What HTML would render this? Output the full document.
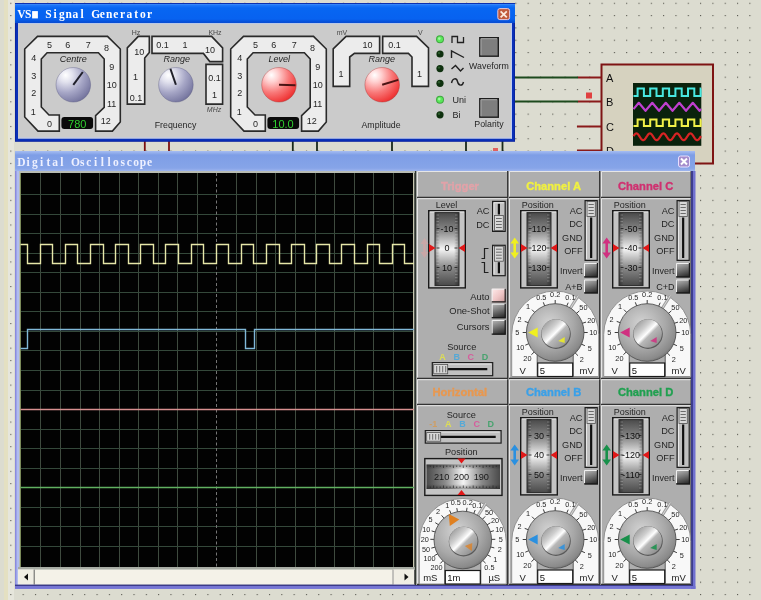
<!DOCTYPE html>
<html><head><meta charset="utf-8"><style>
html,body{margin:0;padding:0;background:#dcdcd0;overflow:hidden}
svg{display:block;will-change:transform}
</style></head><body>
<svg width="761" height="600" viewBox="0 0 761 600">

<defs>
 <pattern id="dots" patternUnits="userSpaceOnUse" x="10.3" y="2.75" width="12.317" height="12.317">
   <rect x="0" y="0" width="1.1" height="1.1" fill="#55554c"/>
 </pattern>
 <linearGradient id="actTitle" x1="0" y1="0" x2="0" y2="1">
   <stop offset="0" stop-color="#5aa0fa"/>
   <stop offset="0.12" stop-color="#1a74f8"/>
   <stop offset="0.25" stop-color="#0766f2"/>
   <stop offset="0.8" stop-color="#0762f0"/>
   <stop offset="0.92" stop-color="#0652dc"/>
   <stop offset="1" stop-color="#0a4cd0"/>
 </linearGradient>
 <linearGradient id="inTitle" x1="0" y1="0" x2="0" y2="1">
   <stop offset="0" stop-color="#a6bdf2"/>
   <stop offset="0.2" stop-color="#7e9ee6"/>
   <stop offset="0.85" stop-color="#86a4e8"/>
   <stop offset="1" stop-color="#9db4ee"/>
 </linearGradient>
 <radialGradient id="knobBlue" cx="0.3" cy="0.25" r="0.9" fx="0.28" fy="0.22">
   <stop offset="0" stop-color="#ffffff"/>
   <stop offset="0.22" stop-color="#e2e2ee"/>
   <stop offset="0.55" stop-color="#a6a6c6"/>
   <stop offset="0.85" stop-color="#7c7ca4"/>
   <stop offset="1" stop-color="#5e5e86"/>
 </radialGradient>
 <linearGradient id="drumV" x1="0" y1="0" x2="0" y2="1">
   <stop offset="0" stop-color="#4a4a4a"/>
   <stop offset="0.25" stop-color="#8a8a8a"/>
   <stop offset="0.5" stop-color="#f4f4f4"/>
   <stop offset="0.75" stop-color="#8a8a8a"/>
   <stop offset="1" stop-color="#4a4a4a"/>
 </linearGradient>
 <linearGradient id="drumVs" x1="0" y1="0" x2="1" y2="0">
   <stop offset="0" stop-color="#000" stop-opacity="0.35"/>
   <stop offset="0.2" stop-color="#000" stop-opacity="0"/>
   <stop offset="0.8" stop-color="#000" stop-opacity="0"/>
   <stop offset="1" stop-color="#000" stop-opacity="0.35"/>
 </linearGradient>
 <linearGradient id="drumH" x1="0" y1="0" x2="1" y2="0">
   <stop offset="0" stop-color="#4a4a4a"/>
   <stop offset="0.25" stop-color="#8a8a8a"/>
   <stop offset="0.5" stop-color="#f4f4f4"/>
   <stop offset="0.75" stop-color="#8a8a8a"/>
   <stop offset="1" stop-color="#4a4a4a"/>
 </linearGradient>
 <linearGradient id="drumHs" x1="0" y1="0" x2="0" y2="1">
   <stop offset="0" stop-color="#000" stop-opacity="0.35"/>
   <stop offset="0.2" stop-color="#000" stop-opacity="0"/>
   <stop offset="0.8" stop-color="#000" stop-opacity="0"/>
   <stop offset="1" stop-color="#000" stop-opacity="0.35"/>
 </linearGradient>
 <linearGradient id="btnDark" x1="0.2" y1="0" x2="0.5" y2="1">
   <stop offset="0" stop-color="#b4b4b4"/>
   <stop offset="0.45" stop-color="#7a7a7a"/>
   <stop offset="1" stop-color="#2e2e2e"/>
 </linearGradient>
 <linearGradient id="btnPink" x1="0" y1="0" x2="1" y2="1">
   <stop offset="0" stop-color="#ffecec"/>
   <stop offset="0.5" stop-color="#f0c8c8"/>
   <stop offset="1" stop-color="#c89898"/>
 </linearGradient>
 <radialGradient id="dialOuter" cx="0.4" cy="0.35" r="0.7">
   <stop offset="0" stop-color="#d4d4d4"/>
   <stop offset="0.6" stop-color="#a8a8a8"/>
   <stop offset="0.9" stop-color="#8a8a8a"/>
   <stop offset="1" stop-color="#6a6a6a"/>
 </radialGradient>
 <linearGradient id="capG" x1="0.1" y1="0.1" x2="0.9" y2="0.9">
   <stop offset="0" stop-color="#9a9a9a"/>
   <stop offset="0.3" stop-color="#cfcfcf"/>
   <stop offset="0.48" stop-color="#ffffff"/>
   <stop offset="0.58" stop-color="#b8b8b8"/>
   <stop offset="1" stop-color="#8c8c8c"/>
 </linearGradient>
 <radialGradient id="knobRed" cx="0.3" cy="0.25" r="0.9" fx="0.28" fy="0.22">
   <stop offset="0" stop-color="#ffffff"/>
   <stop offset="0.22" stop-color="#ffd0d0"/>
   <stop offset="0.55" stop-color="#f87878"/>
   <stop offset="0.85" stop-color="#f03a3a"/>
   <stop offset="1" stop-color="#c82828"/>
 </radialGradient>
</defs>

<rect x="0" y="0" width="761" height="600" fill="#dcdcd0"/>
<rect x="4" y="0" width="4" height="600" fill="#e4e0c2"/>
<rect x="8" y="0" width="6" height="600" fill="#e6e6dc"/>
<rect x="0" y="0" width="761" height="600" fill="url(#dots)"/>
<line x1="515" y1="77.5" x2="578" y2="77.5" stroke="#1d4a1d" stroke-width="2"/>
<line x1="578" y1="77.5" x2="601" y2="77.5" stroke="#8a1a1a" stroke-width="2"/>
<line x1="515" y1="101.5" x2="578" y2="101.5" stroke="#1d4a1d" stroke-width="2"/>
<line x1="578" y1="101.5" x2="601" y2="101.5" stroke="#8a1a1a" stroke-width="2"/>
<line x1="577" y1="126.5" x2="601" y2="126.5" stroke="#8a1a1a" stroke-width="2"/>
<line x1="577" y1="150.5" x2="601" y2="150.5" stroke="#8a1a1a" stroke-width="2"/>
<rect x="586" y="92.5" width="6" height="6" fill="#e04040"/>
<line x1="144.8" y1="141" x2="144.8" y2="152" stroke="#7a1010" stroke-width="1.8"/>
<line x1="169" y1="141" x2="169" y2="152" stroke="#7a1010" stroke-width="1.8"/>
<line x1="292.8" y1="141" x2="292.8" y2="152" stroke="#1a2a1a" stroke-width="1.8"/>
<line x1="317" y1="141" x2="317" y2="152" stroke="#1a2a1a" stroke-width="1.8"/>
<line x1="392" y1="141" x2="392" y2="152" stroke="#1a2a1a" stroke-width="1.8"/>
<line x1="466" y1="141" x2="466" y2="152" stroke="#1a2a1a" stroke-width="1.8"/>
<line x1="502.5" y1="141" x2="502.5" y2="152" stroke="#1a2a1a" stroke-width="1.8"/>
<rect x="493" y="148" width="5" height="3" fill="#e06060"/>
<rect x="601.5" y="64.5" width="111.5" height="99" fill="#d6d2bf" stroke="#7e1414" stroke-width="2"/>
<text x="606" y="82.0" font-family="Liberation Sans, sans-serif" font-size="11" fill="#101010">A</text>
<text x="606" y="106.3" font-family="Liberation Sans, sans-serif" font-size="11" fill="#101010">B</text>
<text x="606" y="130.6" font-family="Liberation Sans, sans-serif" font-size="11" fill="#101010">C</text>
<text x="606" y="154.9" font-family="Liberation Sans, sans-serif" font-size="11" fill="#101010">D</text>
<rect x="633" y="83" width="68.3" height="62.8" fill="#0a220c"/>
<path d="M633.5,96 L637.6,96 L637.6,88.4 L643.9,88.4 L643.9,96 L650.2,96 L650.2,88.4 L656.5,88.4 L656.5,96 L662.8,96 L662.8,88.4 L669.1,88.4 L669.1,96 L675.4,96 L675.4,88.4 L681.7,88.4 L681.7,96 L688.0,96 L688.0,88.4 L694.3,88.4 L694.3,96 L700.6,96 L700.6,88.4 L701,88.4" fill="none" stroke="#48e8e0" stroke-width="2"/>
<polyline points="633.5,109.1 638.8,102.8 645.5,110.8 652.3,102.8 659.0,110.8 665.8,102.8 672.5,110.8 679.3,102.8 686.0,110.8 692.8,102.8 699.5,110.8 701.0,109.1" fill="none" stroke="#c040d0" stroke-width="2.2" stroke-linejoin="round"/>
<path d="M633.5,126 L637.6,126 L637.6,119.4 L643.9,119.4 L643.9,126 L650.2,126 L650.2,119.4 L656.5,119.4 L656.5,126 L662.8,126 L662.8,119.4 L669.1,119.4 L669.1,126 L675.4,126 L675.4,119.4 L681.7,119.4 L681.7,126 L688.0,126 L688.0,119.4 L694.3,119.4 L694.3,126 L700.6,126 L700.6,119.4 L701,119.4" fill="none" stroke="#f0f048" stroke-width="2"/>
<polyline points="633.5,136.1 634.0,135.3 634.5,134.6 635.0,134.1 635.5,133.7 636.0,133.5 636.5,133.4 637.0,133.5 637.5,133.8 638.0,134.3 638.5,134.9 639.0,135.6 639.5,136.4 640.0,137.2 640.5,137.9 641.0,138.6 641.5,139.2 642.0,139.7 642.5,140.0 643.0,140.2 643.5,140.2 644.0,139.9 644.5,139.6 645.0,139.0 645.5,138.4 646.0,137.6 646.5,136.8 647.0,136.1 647.5,135.3 648.0,134.6 648.5,134.1 649.0,133.7 649.5,133.5 650.0,133.4 650.5,133.5 651.0,133.8 651.5,134.3 652.0,134.9 652.5,135.6 653.0,136.4 653.5,137.2 654.0,137.9 654.5,138.6 655.0,139.2 655.5,139.7 656.0,140.0 656.5,140.2 657.0,140.2 657.5,139.9 658.0,139.6 658.5,139.0 659.0,138.4 659.5,137.6 660.0,136.8 660.5,136.1 661.0,135.3 661.5,134.6 662.0,134.1 662.5,133.7 663.0,133.5 663.5,133.4 664.0,133.5 664.5,133.8 665.0,134.3 665.5,134.9 666.0,135.6 666.5,136.4 667.0,137.2 667.5,137.9 668.0,138.6 668.5,139.2 669.0,139.7 669.5,140.0 670.0,140.2 670.5,140.2 671.0,139.9 671.5,139.6 672.0,139.0 672.5,138.4 673.0,137.6 673.5,136.8 674.0,136.1 674.5,135.3 675.0,134.6 675.5,134.1 676.0,133.7 676.5,133.5 677.0,133.4 677.5,133.5 678.0,133.8 678.5,134.3 679.0,134.9 679.5,135.6 680.0,136.4 680.5,137.2 681.0,137.9 681.5,138.6 682.0,139.2 682.5,139.7 683.0,140.0 683.5,140.2 684.0,140.2 684.5,139.9 685.0,139.6 685.5,139.0 686.0,138.4 686.5,137.6 687.0,136.8 687.5,136.1 688.0,135.3 688.5,134.6 689.0,134.1 689.5,133.7 690.0,133.5 690.5,133.4 691.0,133.5 691.5,133.8 692.0,134.3 692.5,134.9 693.0,135.6 693.5,136.4 694.0,137.2 694.5,137.9 695.0,138.6 695.5,139.2 696.0,139.7 696.5,140.0 697.0,140.2 697.5,140.2 698.0,139.9 698.5,139.6 699.0,139.0 699.5,138.4 700.0,137.6 700.5,136.8 701.0,136.1" fill="none" stroke="#d82424" stroke-width="2.2"/>
<rect x="15" y="3" width="500" height="138.8" fill="#0a24a0"/>
<rect x="16" y="3" width="498" height="137.8" fill="#0a30b8"/>
<rect x="15" y="3" width="500" height="20" fill="url(#actTitle)"/>
<rect x="18" y="23" width="494" height="115.5" fill="#cbcbcb"/>
<rect x="18" y="23" width="494" height="1" fill="#b8c8e8"/>
<rect x="511" y="23" width="1" height="115.5" fill="#c0ccf0"/>
<rect x="18" y="137.5" width="494" height="1" fill="#c0ccf0"/>
<rect x="32.10" y="11.099999999999998" width="5.8" height="7.3" fill="#ffffff"/>
<text x="21.38 28.12 48.38 55.12 61.88 68.62 75.38 82.12 95.62 102.38 109.12 115.88 122.62 129.38 136.12 142.88 149.62" y="18.4" font-family="Liberation Serif, serif" font-weight="bold" font-size="11.5" fill="#ffffff" text-anchor="middle">VSSignalGenerator</text>
<rect x="497.8" y="8.6" width="11.8" height="11" rx="2" fill="#c05a3c" stroke="#e8c8d8" stroke-width="1"/>
<path d="M500.6,11.4 L506.8,17.4 M506.8,11.4 L500.6,17.4" stroke="#fbe8dc" stroke-width="1.8"/>
<rect x="15" y="3" width="500" height="1" fill="#0a30b0"/>
<rect x="15" y="151" width="680" height="438" fill="#8a8ade"/>
<rect x="15" y="151" width="680" height="20" fill="url(#inTitle)"/>
<text x="21.38 28.12 34.88 41.62 48.38 55.12 61.88 75.38 82.12 88.88 95.62 102.38 109.12 115.88 122.62 129.38 136.12 142.88 149.62" y="166.4" font-family="Liberation Serif, serif" font-weight="bold" font-size="11.5" fill="#eef0ff" text-anchor="middle">DigitalOscilloscope</text>
<rect x="678.5" y="156" width="11" height="11" rx="2" fill="#a48ccc" stroke="#e8e0ff" stroke-width="1"/>
<path d="M681,158.5 L687,164.5 M687,158.5 L681,164.5" stroke="#ffffff" stroke-width="2"/>
<rect x="16.5" y="171" width="2.5" height="414" fill="#b0bcf0"/>
<rect x="19" y="171" width="397" height="414" fill="#b8bcb4"/>
<rect x="20" y="173" width="394.5" height="394" fill="#020202"/>
<line x1="40.5" y1="173" x2="40.5" y2="567" stroke="#3e4a3e" stroke-width="1"/>
<line x1="60.5" y1="173" x2="60.5" y2="567" stroke="#3e4a3e" stroke-width="1"/>
<line x1="80.5" y1="173" x2="80.5" y2="567" stroke="#3e4a3e" stroke-width="1"/>
<line x1="99.5" y1="173" x2="99.5" y2="567" stroke="#3e4a3e" stroke-width="1"/>
<line x1="119.5" y1="173" x2="119.5" y2="567" stroke="#3e4a3e" stroke-width="1"/>
<line x1="138.5" y1="173" x2="138.5" y2="567" stroke="#3e4a3e" stroke-width="1"/>
<line x1="158.5" y1="173" x2="158.5" y2="567" stroke="#3e4a3e" stroke-width="1"/>
<line x1="177.5" y1="173" x2="177.5" y2="567" stroke="#3e4a3e" stroke-width="1"/>
<line x1="197.5" y1="173" x2="197.5" y2="567" stroke="#3e4a3e" stroke-width="1"/>
<line x1="236.5" y1="173" x2="236.5" y2="567" stroke="#3e4a3e" stroke-width="1"/>
<line x1="256.5" y1="173" x2="256.5" y2="567" stroke="#3e4a3e" stroke-width="1"/>
<line x1="275.5" y1="173" x2="275.5" y2="567" stroke="#3e4a3e" stroke-width="1"/>
<line x1="295.5" y1="173" x2="295.5" y2="567" stroke="#3e4a3e" stroke-width="1"/>
<line x1="315.5" y1="173" x2="315.5" y2="567" stroke="#3e4a3e" stroke-width="1"/>
<line x1="334.5" y1="173" x2="334.5" y2="567" stroke="#3e4a3e" stroke-width="1"/>
<line x1="354.5" y1="173" x2="354.5" y2="567" stroke="#3e4a3e" stroke-width="1"/>
<line x1="373.5" y1="173" x2="373.5" y2="567" stroke="#3e4a3e" stroke-width="1"/>
<line x1="393.5" y1="173" x2="393.5" y2="567" stroke="#3e4a3e" stroke-width="1"/>
<line x1="20" y1="194.5" x2="414" y2="194.5" stroke="#34483a" stroke-width="1"/>
<line x1="20" y1="214.5" x2="414" y2="214.5" stroke="#34483a" stroke-width="1"/>
<line x1="20" y1="233.5" x2="414" y2="233.5" stroke="#34483a" stroke-width="1"/>
<line x1="20" y1="253.5" x2="414" y2="253.5" stroke="#34483a" stroke-width="1"/>
<line x1="20" y1="272.5" x2="414" y2="272.5" stroke="#34483a" stroke-width="1"/>
<line x1="20" y1="292.5" x2="414" y2="292.5" stroke="#34483a" stroke-width="1"/>
<line x1="20" y1="311.5" x2="414" y2="311.5" stroke="#34483a" stroke-width="1"/>
<line x1="20" y1="331.5" x2="414" y2="331.5" stroke="#34483a" stroke-width="1"/>
<line x1="20" y1="350.5" x2="414" y2="350.5" stroke="#34483a" stroke-width="1"/>
<line x1="20" y1="370.5" x2="414" y2="370.5" stroke="#34483a" stroke-width="1"/>
<line x1="20" y1="390.5" x2="414" y2="390.5" stroke="#34483a" stroke-width="1"/>
<line x1="20" y1="409.5" x2="414" y2="409.5" stroke="#34483a" stroke-width="1"/>
<line x1="20" y1="429.5" x2="414" y2="429.5" stroke="#34483a" stroke-width="1"/>
<line x1="20" y1="448.5" x2="414" y2="448.5" stroke="#34483a" stroke-width="1"/>
<line x1="20" y1="468.5" x2="414" y2="468.5" stroke="#34483a" stroke-width="1"/>
<line x1="20" y1="487.5" x2="414" y2="487.5" stroke="#34483a" stroke-width="1"/>
<line x1="20" y1="507.5" x2="414" y2="507.5" stroke="#34483a" stroke-width="1"/>
<line x1="20" y1="526.5" x2="414" y2="526.5" stroke="#34483a" stroke-width="1"/>
<line x1="20" y1="546.5" x2="414" y2="546.5" stroke="#34483a" stroke-width="1"/>
<line x1="216.5" y1="173" x2="216.5" y2="567" stroke="#747474" stroke-width="1" stroke-dasharray="3,2.5"/>
<line x1="20.5" y1="173" x2="20.5" y2="567" stroke="#7a8a5a" stroke-width="1"/>
<line x1="413.5" y1="173" x2="413.5" y2="567" stroke="#c8c8b0" stroke-width="1"/>
<path d="M20.5,244.5 L27.5,244.5 L27.5,263.5 L40.5,263.5 L40.5,244.5 L52.5,244.5 L52.5,263.5 L65.5,263.5 L65.5,244.5 L77.5,244.5 L77.5,263.5 L90.5,263.5 L90.5,244.5 L103.5,244.5 L103.5,263.5 L115.5,263.5 L115.5,244.5 L128.5,244.5 L128.5,263.5 L140.5,263.5 L140.5,244.5 L153.5,244.5 L153.5,263.5 L165.5,263.5 L165.5,244.5 L178.5,244.5 L178.5,263.5 L191.5,263.5 L191.5,244.5 L203.5,244.5 L203.5,263.5 L216.5,263.5 L216.5,244.5 L228.5,244.5 L228.5,263.5 L241.5,263.5 L241.5,244.5 L253.5,244.5 L253.5,263.5 L266.5,263.5 L266.5,244.5 L279.5,244.5 L279.5,263.5 L291.5,263.5 L291.5,244.5 L304.5,244.5 L304.5,263.5 L316.5,263.5 L316.5,244.5 L329.5,244.5 L329.5,263.5 L341.5,263.5 L341.5,244.5 L354.5,244.5 L354.5,263.5 L367.5,263.5 L367.5,244.5 L379.5,244.5 L379.5,263.5 L392.5,263.5 L392.5,244.5 L404.5,244.5 L404.5,263.5 L414,263.5" fill="none" stroke="#e6e6a8" stroke-width="1.4"/>
<path d="M20.5,348.5 L27.5,348.5 L27.5,329.5 L245.5,329.5 L245.5,348.5 L254.5,348.5 L254.5,329.5 L414,329.5" fill="none" stroke="#80b8d8" stroke-width="1.4"/>
<line x1="20.5" y1="409.5" x2="414" y2="409.5" stroke="#d89090" stroke-width="1.4"/>
<line x1="20.5" y1="487.5" x2="414" y2="487.5" stroke="#60b060" stroke-width="1.6"/>
<rect x="18" y="567" width="397" height="2.6" fill="#a8aca4"/>
<rect x="18" y="569.6" width="397" height="15" fill="#f4f2e8"/>
<rect x="18" y="569.6" width="16.5" height="15" fill="#f0eee4"/>
<line x1="34.2" y1="569.6" x2="34.2" y2="584.6" stroke="#606060" stroke-width="1"/>
<path d="M24,577 L28,573.5 L28,580.5 Z" fill="#101010"/>
<rect x="393" y="569.6" width="21.7" height="15" fill="#f0eee4"/>
<line x1="393" y1="569.6" x2="393" y2="584.6" stroke="#909090" stroke-width="1"/>
<line x1="414.5" y1="569.6" x2="414.5" y2="584.6" stroke="#606060" stroke-width="1"/>
<path d="M408.5,577 L404.5,573.5 L404.5,580.5 Z" fill="#101010"/>
<rect x="15" y="584.6" width="680" height="1.6" fill="#3a3a8a"/>
<rect x="15" y="586.2" width="680.5" height="2.5" fill="#7676d4"/>
<rect x="415" y="171" width="278" height="414" fill="#aeaeae"/>
<path d="M59.3,131.1 L59.3,115.0 L49.0,115.0 L41.3,107.0 L41.3,59.0 L47.1,52.8 L98.4,52.8 L104.2,59.0 L104.2,107.4 L95.6,115.7 L95.6,131.1 L112.4,131.1 L120.3,122.0 L120.3,49.0 L107.5,36.4 L37.5,36.4 L24.7,49.0 L24.7,117.0 L38.0,131.1 Z" fill="#ececec" stroke="#2a2a2a" stroke-width="1.6" stroke-linejoin="miter"/>
<text x="49.4" y="127.3" font-family="Liberation Sans, sans-serif" font-size="9" fill="#262626" text-anchor="middle" >0</text>
<text x="33.3" y="115.3" font-family="Liberation Sans, sans-serif" font-size="9" fill="#262626" text-anchor="middle" >1</text>
<text x="33.7" y="96.1" font-family="Liberation Sans, sans-serif" font-size="9" fill="#262626" text-anchor="middle" >2</text>
<text x="33.7" y="79.3" font-family="Liberation Sans, sans-serif" font-size="9" fill="#262626" text-anchor="middle" >3</text>
<text x="33.7" y="60.9" font-family="Liberation Sans, sans-serif" font-size="9" fill="#262626" text-anchor="middle" >4</text>
<text x="49.4" y="47.5" font-family="Liberation Sans, sans-serif" font-size="9" fill="#262626" text-anchor="middle" >5</text>
<text x="67.8" y="47.5" font-family="Liberation Sans, sans-serif" font-size="9" fill="#262626" text-anchor="middle" >6</text>
<text x="88.3" y="47.5" font-family="Liberation Sans, sans-serif" font-size="9" fill="#262626" text-anchor="middle" >7</text>
<text x="106.6" y="50.7" font-family="Liberation Sans, sans-serif" font-size="9" fill="#262626" text-anchor="middle" >8</text>
<text x="111.7" y="70.4" font-family="Liberation Sans, sans-serif" font-size="9" fill="#262626" text-anchor="middle" >9</text>
<text x="111.7" y="87.8" font-family="Liberation Sans, sans-serif" font-size="9" fill="#262626" text-anchor="middle" >10</text>
<text x="111.7" y="107.1" font-family="Liberation Sans, sans-serif" font-size="9" fill="#262626" text-anchor="middle" >11</text>
<text x="105.7" y="123.6" font-family="Liberation Sans, sans-serif" font-size="9" fill="#262626" text-anchor="middle" >12</text>
<rect x="61.4" y="117" width="31.7" height="12" rx="3" fill="#0a0a0a"/>
<text x="73.3" y="62.0" font-family="Liberation Sans, sans-serif" font-size="9" fill="#262626" text-anchor="middle" font-style="italic">Centre</text>
<text x="77.3" y="127.6" font-family="Liberation Sans, sans-serif" font-size="11" fill="#30d030" text-anchor="middle" >780</text>
<circle cx="73.3" cy="84.8" r="17.3" fill="url(#knobBlue)" stroke="#50507a" stroke-width="0.6" stroke-opacity="0.6"/>
<line x1="73.3" y1="84.8" x2="82.8" y2="72.0" stroke="#20202a" stroke-width="2" stroke-linecap="butt"/>
<path d="M265.3,131.1 L265.3,115.0 L255.0,115.0 L247.3,107.0 L247.3,59.0 L253.1,52.8 L304.4,52.8 L310.2,59.0 L310.2,107.4 L301.6,115.7 L301.6,131.1 L318.4,131.1 L326.3,122.0 L326.3,49.0 L313.5,36.4 L243.5,36.4 L230.7,49.0 L230.7,117.0 L244.0,131.1 Z" fill="#ececec" stroke="#2a2a2a" stroke-width="1.6" stroke-linejoin="miter"/>
<text x="255.4" y="127.3" font-family="Liberation Sans, sans-serif" font-size="9" fill="#262626" text-anchor="middle" >0</text>
<text x="239.3" y="115.3" font-family="Liberation Sans, sans-serif" font-size="9" fill="#262626" text-anchor="middle" >1</text>
<text x="239.7" y="96.1" font-family="Liberation Sans, sans-serif" font-size="9" fill="#262626" text-anchor="middle" >2</text>
<text x="239.7" y="79.3" font-family="Liberation Sans, sans-serif" font-size="9" fill="#262626" text-anchor="middle" >3</text>
<text x="239.7" y="60.9" font-family="Liberation Sans, sans-serif" font-size="9" fill="#262626" text-anchor="middle" >4</text>
<text x="255.4" y="47.5" font-family="Liberation Sans, sans-serif" font-size="9" fill="#262626" text-anchor="middle" >5</text>
<text x="273.8" y="47.5" font-family="Liberation Sans, sans-serif" font-size="9" fill="#262626" text-anchor="middle" >6</text>
<text x="294.3" y="47.5" font-family="Liberation Sans, sans-serif" font-size="9" fill="#262626" text-anchor="middle" >7</text>
<text x="312.6" y="50.7" font-family="Liberation Sans, sans-serif" font-size="9" fill="#262626" text-anchor="middle" >8</text>
<text x="317.7" y="70.4" font-family="Liberation Sans, sans-serif" font-size="9" fill="#262626" text-anchor="middle" >9</text>
<text x="317.7" y="87.8" font-family="Liberation Sans, sans-serif" font-size="9" fill="#262626" text-anchor="middle" >10</text>
<text x="317.7" y="107.1" font-family="Liberation Sans, sans-serif" font-size="9" fill="#262626" text-anchor="middle" >11</text>
<text x="311.7" y="123.6" font-family="Liberation Sans, sans-serif" font-size="9" fill="#262626" text-anchor="middle" >12</text>
<rect x="267.4" y="117" width="31.7" height="12" rx="3" fill="#0a0a0a"/>
<text x="279.3" y="62.0" font-family="Liberation Sans, sans-serif" font-size="9" fill="#262626" text-anchor="middle" font-style="italic">Level</text>
<text x="283.0" y="127.6" font-family="Liberation Sans, sans-serif" font-size="11" fill="#30d030" text-anchor="middle" >10.0</text>
<circle cx="279" cy="84.8" r="17.3" fill="url(#knobRed)" stroke="#a02828" stroke-width="0.6" stroke-opacity="0.6"/>
<line x1="279" y1="84.8" x2="295.5" y2="85.2" stroke="#4a1414" stroke-width="2" stroke-linecap="butt"/>
<path d="M127.3,47.9 L138.3,36.4 L149.3,36.4 L149.3,52.5 L144.7,58.0 L144.7,104.1 L127.3,104.1 Z" fill="#ececec" stroke="#2a2a2a" stroke-width="1.6" stroke-linejoin="miter"/>
<path d="M152.0,36.4 L211.6,36.4 L222.6,47.9 L222.6,61.6 L209.8,61.6 L203.4,53.4 L152.0,53.4 Z" fill="#ececec" stroke="#2a2a2a" stroke-width="1.6" stroke-linejoin="miter"/>
<path d="M206.0,64.4 L222.6,64.4 L222.6,104.1 L206.0,104.1 Z" fill="#ececec" stroke="#2a2a2a" stroke-width="1.6" stroke-linejoin="miter"/>
<text x="139.2" y="54.9" font-family="Liberation Sans, sans-serif" font-size="9" fill="#262626" text-anchor="middle" >10</text>
<text x="135.6" y="80.0" font-family="Liberation Sans, sans-serif" font-size="9" fill="#262626" text-anchor="middle" >1</text>
<text x="136.1" y="101.2" font-family="Liberation Sans, sans-serif" font-size="9" fill="#262626" text-anchor="middle" >0.1</text>
<text x="162.5" y="48.1" font-family="Liberation Sans, sans-serif" font-size="9" fill="#262626" text-anchor="middle" >0.1</text>
<text x="185.0" y="48.1" font-family="Liberation Sans, sans-serif" font-size="9" fill="#262626" text-anchor="middle" >1</text>
<text x="210.1" y="53.0" font-family="Liberation Sans, sans-serif" font-size="9" fill="#262626" text-anchor="middle" >10</text>
<text x="214.4" y="81.4" font-family="Liberation Sans, sans-serif" font-size="9" fill="#262626" text-anchor="middle" >0.1</text>
<text x="214.4" y="98.3" font-family="Liberation Sans, sans-serif" font-size="9" fill="#262626" text-anchor="middle" >1</text>
<text x="136.0" y="35.0" font-family="Liberation Sans, sans-serif" font-size="7" fill="#484848" text-anchor="middle" >Hz</text>
<text x="215.0" y="35.0" font-family="Liberation Sans, sans-serif" font-size="7" fill="#484848" text-anchor="middle" >KHz</text>
<text x="214.0" y="111.5" font-family="Liberation Sans, sans-serif" font-size="7" fill="#484848" text-anchor="middle" font-style="italic">MHz</text>
<text x="176.8" y="62.0" font-family="Liberation Sans, sans-serif" font-size="9" fill="#262626" text-anchor="middle" font-style="italic">Range</text>
<text x="175.5" y="128.2" font-family="Liberation Sans, sans-serif" font-size="8.8" fill="#262626" text-anchor="middle" >Frequency</text>
<circle cx="175.9" cy="84.8" r="17.3" fill="url(#knobBlue)" stroke="#50507a" stroke-width="0.6" stroke-opacity="0.6"/>
<line x1="175.9" y1="84.8" x2="170.4" y2="68.7" stroke="#20202a" stroke-width="2" stroke-linecap="butt"/>
<path d="M333.2,48.8 L346.1,36.4 L379.6,36.4 L379.6,53.4 L354.4,53.4 L349.7,57.0 L349.7,86.4 L333.2,86.4 Z" fill="#ececec" stroke="#2a2a2a" stroke-width="1.6" stroke-linejoin="miter"/>
<path d="M382.7,36.4 L416.6,36.4 L428.5,47.9 L428.5,86.4 L412.0,86.4 L412.0,57.0 L408.4,53.4 L382.7,53.4 Z" fill="#ececec" stroke="#2a2a2a" stroke-width="1.6" stroke-linejoin="miter"/>
<text x="367.5" y="48.1" font-family="Liberation Sans, sans-serif" font-size="9" fill="#262626" text-anchor="middle" >10</text>
<text x="341.1" y="77.4" font-family="Liberation Sans, sans-serif" font-size="9" fill="#262626" text-anchor="middle" >1</text>
<text x="394.6" y="48.1" font-family="Liberation Sans, sans-serif" font-size="9" fill="#262626" text-anchor="middle" >0.1</text>
<text x="419.4" y="77.4" font-family="Liberation Sans, sans-serif" font-size="9" fill="#262626" text-anchor="middle" >1</text>
<text x="342.0" y="35.0" font-family="Liberation Sans, sans-serif" font-size="7" fill="#484848" text-anchor="middle" >mV</text>
<text x="420.3" y="35.0" font-family="Liberation Sans, sans-serif" font-size="7" fill="#484848" text-anchor="middle" >V</text>
<text x="381.8" y="62.0" font-family="Liberation Sans, sans-serif" font-size="9" fill="#262626" text-anchor="middle" font-style="italic">Range</text>
<text x="381.0" y="128.2" font-family="Liberation Sans, sans-serif" font-size="8.8" fill="#262626" text-anchor="middle" >Amplitude</text>
<circle cx="382.2" cy="84.8" r="17.3" fill="url(#knobRed)" stroke="#a02828" stroke-width="0.6" stroke-opacity="0.6"/>
<line x1="382.2" y1="84.8" x2="398.3" y2="79.9" stroke="#4a1414" stroke-width="2" stroke-linecap="butt"/>
<circle cx="440" cy="39.3" r="4" fill="#40a840"/><circle cx="440" cy="39.3" r="3" fill="#5ae85a"/><circle cx="439.3" cy="38.599999999999994" r="1.3" fill="#a0f8a0"/>
<circle cx="440" cy="54" r="3.6" fill="#0e300e"/><circle cx="439" cy="53" r="1.2" fill="#2a5a2a"/>
<circle cx="440" cy="68.6" r="3.6" fill="#0e300e"/><circle cx="439" cy="67.6" r="1.2" fill="#2a5a2a"/>
<circle cx="440" cy="83.3" r="3.6" fill="#0e300e"/><circle cx="439" cy="82.3" r="1.2" fill="#2a5a2a"/>
<circle cx="440" cy="99.8" r="4" fill="#40a840"/><circle cx="440" cy="99.8" r="3" fill="#5ae85a"/><circle cx="439.3" cy="99.1" r="1.3" fill="#a0f8a0"/>
<circle cx="440" cy="114.8" r="3.6" fill="#0e300e"/><circle cx="439" cy="113.8" r="1.2" fill="#2a5a2a"/>
<path d="M452,43 L452,36.5 L457.5,36.5 L457.5,42.5 L463.5,42.5 L463.5,37" fill="none" stroke="#202020" stroke-width="1.3"/>
<path d="M451.5,58 L451.5,51 L464,57.5" fill="none" stroke="#202020" stroke-width="1.4"/>
<path d="M451.5,69 L455.5,65.5 L460.5,71 L463.5,68" fill="none" stroke="#202020" stroke-width="1.4"/>
<path d="M451.5,83 C452.5,78 456.5,77.5 457.5,81.5 C458.5,86 462.5,86.5 463.5,82" fill="none" stroke="#202020" stroke-width="1.4"/>
<text x="452.5" y="103.0" font-family="Liberation Sans, sans-serif" font-size="9" fill="#262626" text-anchor="start" >Uni</text>
<text x="452.5" y="118.0" font-family="Liberation Sans, sans-serif" font-size="9" fill="#262626" text-anchor="start" >Bi</text>
<rect x="479.8" y="37.7" width="18.5" height="18.5" fill="#7e7e7e" stroke="#1e1e1e" stroke-width="1.4"/>
<path d="M481,55.2 L481,38.7 L497,38.7" fill="none" stroke="#a8a8a8" stroke-width="1"/>
<rect x="479.8" y="98.7" width="18.5" height="18.5" fill="#7e7e7e" stroke="#1e1e1e" stroke-width="1.4"/>
<path d="M481,116.2 L481,99.7 L497,99.7" fill="none" stroke="#a8a8a8" stroke-width="1"/>
<text x="489.0" y="69.2" font-family="Liberation Sans, sans-serif" font-size="8.8" fill="#262626" text-anchor="middle" >Waveform</text>
<text x="489.0" y="127.2" font-family="Liberation Sans, sans-serif" font-size="8.8" fill="#262626" text-anchor="middle" >Polarity</text>
<line x1="415.5" y1="171" x2="415.5" y2="585" stroke="#303830" stroke-width="1.2"/>
<rect x="417" y="171" width="91.30000000000001" height="27" fill="#aeaeae"/>
<path d="M417.5,198 L417.5,171.5 L508.3,171.5" fill="none" stroke="#e6e6e6" stroke-width="1"/>
<path d="M417,197.4 L507.7,197.4 L507.7,171" fill="none" stroke="#333333" stroke-width="1.3"/>
<rect x="417" y="198.2" width="91.30000000000001" height="180.7" fill="#aeaeae"/>
<path d="M417.5,378.9 L417.5,198.7 L508.3,198.7" fill="none" stroke="#e6e6e6" stroke-width="1"/>
<path d="M417,378.29999999999995 L507.7,378.29999999999995 L507.7,198.2" fill="none" stroke="#333333" stroke-width="1.3"/>
<rect x="417" y="379.2" width="91.30000000000001" height="25.80000000000001" fill="#aeaeae"/>
<path d="M417.5,405 L417.5,379.7 L508.3,379.7" fill="none" stroke="#e6e6e6" stroke-width="1"/>
<path d="M417,404.4 L507.7,404.4 L507.7,379.2" fill="none" stroke="#333333" stroke-width="1.3"/>
<rect x="417" y="405.2" width="91.30000000000001" height="179.8" fill="#aeaeae"/>
<path d="M417.5,585 L417.5,405.7 L508.3,405.7" fill="none" stroke="#e6e6e6" stroke-width="1"/>
<path d="M417,584.4 L507.7,584.4 L507.7,405.2" fill="none" stroke="#333333" stroke-width="1.3"/>
<rect x="509" y="171" width="91.29999999999995" height="27" fill="#aeaeae"/>
<path d="M509.5,198 L509.5,171.5 L600.3,171.5" fill="none" stroke="#e6e6e6" stroke-width="1"/>
<path d="M509,197.4 L599.6999999999999,197.4 L599.6999999999999,171" fill="none" stroke="#333333" stroke-width="1.3"/>
<rect x="509" y="198.2" width="91.29999999999995" height="180.7" fill="#aeaeae"/>
<path d="M509.5,378.9 L509.5,198.7 L600.3,198.7" fill="none" stroke="#e6e6e6" stroke-width="1"/>
<path d="M509,378.29999999999995 L599.6999999999999,378.29999999999995 L599.6999999999999,198.2" fill="none" stroke="#333333" stroke-width="1.3"/>
<rect x="509" y="379.2" width="91.29999999999995" height="25.80000000000001" fill="#aeaeae"/>
<path d="M509.5,405 L509.5,379.7 L600.3,379.7" fill="none" stroke="#e6e6e6" stroke-width="1"/>
<path d="M509,404.4 L599.6999999999999,404.4 L599.6999999999999,379.2" fill="none" stroke="#333333" stroke-width="1.3"/>
<rect x="509" y="405.2" width="91.29999999999995" height="179.8" fill="#aeaeae"/>
<path d="M509.5,585 L509.5,405.7 L600.3,405.7" fill="none" stroke="#e6e6e6" stroke-width="1"/>
<path d="M509,584.4 L599.6999999999999,584.4 L599.6999999999999,405.2" fill="none" stroke="#333333" stroke-width="1.3"/>
<rect x="601" y="171" width="90.79999999999995" height="27" fill="#aeaeae"/>
<path d="M601.5,198 L601.5,171.5 L691.8,171.5" fill="none" stroke="#e6e6e6" stroke-width="1"/>
<path d="M601,197.4 L691.1999999999999,197.4 L691.1999999999999,171" fill="none" stroke="#333333" stroke-width="1.3"/>
<rect x="601" y="198.2" width="90.79999999999995" height="180.7" fill="#aeaeae"/>
<path d="M601.5,378.9 L601.5,198.7 L691.8,198.7" fill="none" stroke="#e6e6e6" stroke-width="1"/>
<path d="M601,378.29999999999995 L691.1999999999999,378.29999999999995 L691.1999999999999,198.2" fill="none" stroke="#333333" stroke-width="1.3"/>
<rect x="601" y="379.2" width="90.79999999999995" height="25.80000000000001" fill="#aeaeae"/>
<path d="M601.5,405 L601.5,379.7 L691.8,379.7" fill="none" stroke="#e6e6e6" stroke-width="1"/>
<path d="M601,404.4 L691.1999999999999,404.4 L691.1999999999999,379.2" fill="none" stroke="#333333" stroke-width="1.3"/>
<rect x="601" y="405.2" width="90.79999999999995" height="179.8" fill="#aeaeae"/>
<path d="M601.5,585 L601.5,405.7 L691.8,405.7" fill="none" stroke="#e6e6e6" stroke-width="1"/>
<path d="M601,584.4 L691.1999999999999,584.4 L691.1999999999999,405.2" fill="none" stroke="#333333" stroke-width="1.3"/>
<rect x="691" y="171" width="4.5" height="418" fill="#7070d0"/>
<line x1="692" y1="171" x2="692" y2="586" stroke="#30307a" stroke-width="1.6"/>
<text x="460.0" y="190.0" font-family="Liberation Sans, sans-serif" font-size="11.2" fill="#e2a2a8" text-anchor="middle" font-weight="bold" stroke="#e2a2a8" stroke-width="0.35">Trigger</text>
<text x="553.6" y="190.0" font-family="Liberation Sans, sans-serif" font-size="11.2" fill="#f0f040" text-anchor="middle" font-weight="bold" stroke="#f0f040" stroke-width="0.35">Channel A</text>
<text x="645.6" y="190.0" font-family="Liberation Sans, sans-serif" font-size="11.2" fill="#d03070" text-anchor="middle" font-weight="bold" stroke="#d03070" stroke-width="0.35">Channel C</text>
<text x="459.8" y="395.8" font-family="Liberation Sans, sans-serif" font-size="11.2" fill="#e89850" text-anchor="middle" font-weight="bold" stroke="#e89850" stroke-width="0.35">Horizontal</text>
<text x="553.6" y="395.8" font-family="Liberation Sans, sans-serif" font-size="11.2" fill="#3aa0e8" text-anchor="middle" font-weight="bold" stroke="#3aa0e8" stroke-width="0.35">Channel B</text>
<text x="645.6" y="395.8" font-family="Liberation Sans, sans-serif" font-size="11.2" fill="#20a050" text-anchor="middle" font-weight="bold" stroke="#20a050" stroke-width="0.35">Channel D</text>
<text x="537.7" y="207.5" font-family="Liberation Sans, sans-serif" font-size="9" fill="#262626" text-anchor="middle" >Position</text>
<rect x="520.7" y="210.7" width="36.6" height="77.2" fill="#c4c4c4" stroke="#1a1a1a" stroke-width="1.4"/>
<line x1="522" y1="212" x2="556" y2="212" stroke="#e8e8e8" stroke-width="1"/>
<rect x="527" y="212.6" width="24" height="73" fill="url(#drumV)"/>
<rect x="527" y="212.6" width="24" height="73" fill="url(#drumVs)"/>
<rect x="527" y="212.6" width="24" height="73" fill="none" stroke="#2a2a2a" stroke-width="1"/>
<line x1="528.5" y1="215.0" x2="531.0" y2="215.0" stroke="#e0e0e0" stroke-width="0.7" opacity="0.45"/>
<line x1="547.0" y1="215.0" x2="549.5" y2="215.0" stroke="#e0e0e0" stroke-width="0.7" opacity="0.45"/>
<line x1="528.5" y1="218.3" x2="531.0" y2="218.3" stroke="#e0e0e0" stroke-width="0.7" opacity="0.45"/>
<line x1="547.0" y1="218.3" x2="549.5" y2="218.3" stroke="#e0e0e0" stroke-width="0.7" opacity="0.45"/>
<line x1="528.5" y1="221.6" x2="531.0" y2="221.6" stroke="#e0e0e0" stroke-width="0.7" opacity="0.45"/>
<line x1="547.0" y1="221.6" x2="549.5" y2="221.6" stroke="#e0e0e0" stroke-width="0.7" opacity="0.45"/>
<line x1="528.5" y1="224.9" x2="531.0" y2="224.9" stroke="#e0e0e0" stroke-width="0.7" opacity="0.45"/>
<line x1="547.0" y1="224.9" x2="549.5" y2="224.9" stroke="#e0e0e0" stroke-width="0.7" opacity="0.45"/>
<line x1="528.5" y1="228.2" x2="531.0" y2="228.2" stroke="#e0e0e0" stroke-width="0.7" opacity="0.45"/>
<line x1="547.0" y1="228.2" x2="549.5" y2="228.2" stroke="#e0e0e0" stroke-width="0.7" opacity="0.45"/>
<line x1="528.5" y1="231.5" x2="531.0" y2="231.5" stroke="#e0e0e0" stroke-width="0.7" opacity="0.45"/>
<line x1="547.0" y1="231.5" x2="549.5" y2="231.5" stroke="#e0e0e0" stroke-width="0.7" opacity="0.45"/>
<line x1="528.5" y1="234.8" x2="531.0" y2="234.8" stroke="#e0e0e0" stroke-width="0.7" opacity="0.45"/>
<line x1="547.0" y1="234.8" x2="549.5" y2="234.8" stroke="#e0e0e0" stroke-width="0.7" opacity="0.45"/>
<line x1="528.5" y1="238.1" x2="531.0" y2="238.1" stroke="#e0e0e0" stroke-width="0.7" opacity="0.45"/>
<line x1="547.0" y1="238.1" x2="549.5" y2="238.1" stroke="#e0e0e0" stroke-width="0.7" opacity="0.45"/>
<line x1="528.5" y1="241.4" x2="531.0" y2="241.4" stroke="#e0e0e0" stroke-width="0.7" opacity="0.45"/>
<line x1="547.0" y1="241.4" x2="549.5" y2="241.4" stroke="#e0e0e0" stroke-width="0.7" opacity="0.45"/>
<line x1="528.5" y1="244.7" x2="531.0" y2="244.7" stroke="#e0e0e0" stroke-width="0.7" opacity="0.45"/>
<line x1="547.0" y1="244.7" x2="549.5" y2="244.7" stroke="#e0e0e0" stroke-width="0.7" opacity="0.45"/>
<line x1="528.5" y1="248.0" x2="531.0" y2="248.0" stroke="#e0e0e0" stroke-width="0.7" opacity="0.45"/>
<line x1="547.0" y1="248.0" x2="549.5" y2="248.0" stroke="#e0e0e0" stroke-width="0.7" opacity="0.45"/>
<line x1="528.5" y1="251.3" x2="531.0" y2="251.3" stroke="#e0e0e0" stroke-width="0.7" opacity="0.45"/>
<line x1="547.0" y1="251.3" x2="549.5" y2="251.3" stroke="#e0e0e0" stroke-width="0.7" opacity="0.45"/>
<line x1="528.5" y1="254.6" x2="531.0" y2="254.6" stroke="#e0e0e0" stroke-width="0.7" opacity="0.45"/>
<line x1="547.0" y1="254.6" x2="549.5" y2="254.6" stroke="#e0e0e0" stroke-width="0.7" opacity="0.45"/>
<line x1="528.5" y1="257.9" x2="531.0" y2="257.9" stroke="#e0e0e0" stroke-width="0.7" opacity="0.45"/>
<line x1="547.0" y1="257.9" x2="549.5" y2="257.9" stroke="#e0e0e0" stroke-width="0.7" opacity="0.45"/>
<line x1="528.5" y1="261.2" x2="531.0" y2="261.2" stroke="#e0e0e0" stroke-width="0.7" opacity="0.45"/>
<line x1="547.0" y1="261.2" x2="549.5" y2="261.2" stroke="#e0e0e0" stroke-width="0.7" opacity="0.45"/>
<line x1="528.5" y1="264.5" x2="531.0" y2="264.5" stroke="#e0e0e0" stroke-width="0.7" opacity="0.45"/>
<line x1="547.0" y1="264.5" x2="549.5" y2="264.5" stroke="#e0e0e0" stroke-width="0.7" opacity="0.45"/>
<line x1="528.5" y1="267.8" x2="531.0" y2="267.8" stroke="#e0e0e0" stroke-width="0.7" opacity="0.45"/>
<line x1="547.0" y1="267.8" x2="549.5" y2="267.8" stroke="#e0e0e0" stroke-width="0.7" opacity="0.45"/>
<line x1="528.5" y1="271.1" x2="531.0" y2="271.1" stroke="#e0e0e0" stroke-width="0.7" opacity="0.45"/>
<line x1="547.0" y1="271.1" x2="549.5" y2="271.1" stroke="#e0e0e0" stroke-width="0.7" opacity="0.45"/>
<line x1="528.5" y1="274.4" x2="531.0" y2="274.4" stroke="#e0e0e0" stroke-width="0.7" opacity="0.45"/>
<line x1="547.0" y1="274.4" x2="549.5" y2="274.4" stroke="#e0e0e0" stroke-width="0.7" opacity="0.45"/>
<line x1="528.5" y1="277.7" x2="531.0" y2="277.7" stroke="#e0e0e0" stroke-width="0.7" opacity="0.45"/>
<line x1="547.0" y1="277.7" x2="549.5" y2="277.7" stroke="#e0e0e0" stroke-width="0.7" opacity="0.45"/>
<line x1="528.5" y1="281.0" x2="531.0" y2="281.0" stroke="#e0e0e0" stroke-width="0.7" opacity="0.45"/>
<line x1="547.0" y1="281.0" x2="549.5" y2="281.0" stroke="#e0e0e0" stroke-width="0.7" opacity="0.45"/>
<line x1="528.5" y1="228.5" x2="531.5" y2="228.5" stroke="#262626" stroke-width="0.9"/>
<line x1="546.5" y1="228.5" x2="549.5" y2="228.5" stroke="#262626" stroke-width="0.9"/>
<text x="539.0" y="231.8" font-family="Liberation Sans, sans-serif" font-size="9" fill="#101010" text-anchor="middle" >110</text>
<line x1="528.5" y1="248.0" x2="531.5" y2="248.0" stroke="#262626" stroke-width="0.9"/>
<line x1="546.5" y1="248.0" x2="549.5" y2="248.0" stroke="#262626" stroke-width="0.9"/>
<text x="539.0" y="251.3" font-family="Liberation Sans, sans-serif" font-size="9" fill="#101010" text-anchor="middle" >120</text>
<line x1="528.5" y1="267.5" x2="531.5" y2="267.5" stroke="#262626" stroke-width="0.9"/>
<line x1="546.5" y1="267.5" x2="549.5" y2="267.5" stroke="#262626" stroke-width="0.9"/>
<text x="539.0" y="270.8" font-family="Liberation Sans, sans-serif" font-size="9" fill="#101010" text-anchor="middle" >130</text>
<path d="M521,244 L527.5,248 L521,252 Z" fill="#e01818"/>
<path d="M557,244 L550.5,248 L557,252 Z" fill="#e01818"/>
<path d="M514.7,237.5 L519.0,243.5 L516.0,243.5 L516.0,252.5 L519.0,252.5 L514.7,258.5 L510.40000000000003,252.5 L513.4000000000001,252.5 L513.4000000000001,243.5 L510.40000000000003,243.5 Z" fill="#f0f020"/>
<text x="582.5" y="213.6" font-family="Liberation Sans, sans-serif" font-size="9.2" fill="#262626" text-anchor="end" >AC</text>
<text x="582.5" y="227.2" font-family="Liberation Sans, sans-serif" font-size="9.2" fill="#262626" text-anchor="end" >DC</text>
<text x="582.5" y="240.8" font-family="Liberation Sans, sans-serif" font-size="9.2" fill="#262626" text-anchor="end" >GND</text>
<text x="582.5" y="254.4" font-family="Liberation Sans, sans-serif" font-size="9.2" fill="#262626" text-anchor="end" >OFF</text>
<rect x="585.1" y="200.6" width="12.099999999999955" height="59.8" fill="#c0c0c0" stroke="#1e1e1e" stroke-width="1.2"/>
<path d="M586.5,259 L586.5,202 L595.8,202" fill="none" stroke="#e8e8e8" stroke-width="1"/>
<line x1="591.15" y1="217.5" x2="591.15" y2="258" stroke="#101010" stroke-width="2.2"/>
<rect x="587.0" y="201.5" width="8.299999999999955" height="15" fill="#d8d8d8" stroke="#505050" stroke-width="0.8"/>
<line x1="588.5" y1="204.5" x2="593.8" y2="204.5" stroke="#505050" stroke-width="0.8"/>
<line x1="588.5" y1="207.5" x2="593.8" y2="207.5" stroke="#505050" stroke-width="0.8"/>
<line x1="588.5" y1="210.5" x2="593.8" y2="210.5" stroke="#505050" stroke-width="0.8"/>
<line x1="588.5" y1="213.5" x2="593.8" y2="213.5" stroke="#505050" stroke-width="0.8"/>
<rect x="584" y="263" width="14" height="14.5" fill="url(#btnDark)"/>
<path d="M584.5,277.5 L584.5,263.5 L598,263.5" fill="none" stroke="#f0f0f0" stroke-width="1"/>
<path d="M584,276.9 L597.4,276.9 L597.4,263" fill="none" stroke="#1a1a1a" stroke-width="1.2"/>
<text x="582.5" y="273.5" font-family="Liberation Sans, sans-serif" font-size="9" fill="#262626" text-anchor="end" >Invert</text>
<rect x="584" y="279.5" width="14" height="14.0" fill="url(#btnDark)"/>
<path d="M584.5,293.5 L584.5,280.0 L598,280.0" fill="none" stroke="#f0f0f0" stroke-width="1"/>
<path d="M584,292.9 L597.4,292.9 L597.4,279.5" fill="none" stroke="#1a1a1a" stroke-width="1.2"/>
<text x="582.5" y="289.5" font-family="Liberation Sans, sans-serif" font-size="9" fill="#262626" text-anchor="end" >A+B</text>
<path d="M511.70000000000005,376.5 L511.70000000000005,334.5 A43.5,43.5 0 0 1 598.7,334.5 L598.7,376.5 Z" fill="#f8f8f8" stroke="#909090" stroke-width="1"/>
<line x1="570.0" y1="308.8" x2="578.3" y2="295.6" stroke="#a0a0a0" stroke-width="3"/>
<line x1="570.0" y1="308.8" x2="578.3" y2="295.6" stroke="#d8d8d8" stroke-width="1"/>
<rect x="537.2" y="347.5" width="36" height="29.0" fill="#aeaeae"/>
<line x1="537.2" y1="347.5" x2="537.2" y2="376.5" stroke="#5a5a5a" stroke-width="1"/>
<line x1="573.2" y1="347.5" x2="573.2" y2="376.5" stroke="#5a5a5a" stroke-width="1"/>
<line x1="566.4" y1="306.8" x2="568.2" y2="302.7" stroke="#262626" stroke-width="0.9"/>
<text x="570.4" y="300.3" font-family="Liberation Sans, sans-serif" font-size="7.3" fill="#262626" text-anchor="middle" >0.1</text>
<line x1="555.2" y1="304.5" x2="555.2" y2="300.0" stroke="#262626" stroke-width="0.9"/>
<text x="555.2" y="297.1" font-family="Liberation Sans, sans-serif" font-size="7.3" fill="#262626" text-anchor="middle" >0.2</text>
<line x1="544.9" y1="306.4" x2="543.3" y2="302.3" stroke="#262626" stroke-width="0.9"/>
<text x="541.3" y="299.7" font-family="Liberation Sans, sans-serif" font-size="7.3" fill="#262626" text-anchor="middle" >0.5</text>
<line x1="535.2" y1="312.9" x2="532.0" y2="309.7" stroke="#262626" stroke-width="0.9"/>
<text x="528.1" y="308.5" font-family="Liberation Sans, sans-serif" font-size="7.3" fill="#262626" text-anchor="middle" >1</text>
<line x1="528.9" y1="322.9" x2="524.7" y2="321.4" stroke="#262626" stroke-width="0.9"/>
<text x="519.5" y="322.1" font-family="Liberation Sans, sans-serif" font-size="7.3" fill="#262626" text-anchor="middle" >2</text>
<line x1="527.2" y1="332.5" x2="522.7" y2="332.5" stroke="#262626" stroke-width="0.9"/>
<text x="517.2" y="335.1" font-family="Liberation Sans, sans-serif" font-size="7.3" fill="#262626" text-anchor="middle" >5</text>
<line x1="529.4" y1="343.4" x2="525.3" y2="345.2" stroke="#262626" stroke-width="0.9"/>
<text x="520.2" y="349.9" font-family="Liberation Sans, sans-serif" font-size="7.3" fill="#262626" text-anchor="middle" >10</text>
<line x1="534.7" y1="351.6" x2="531.4" y2="354.7" stroke="#262626" stroke-width="0.9"/>
<text x="527.4" y="361.0" font-family="Liberation Sans, sans-serif" font-size="7.3" fill="#262626" text-anchor="middle" >20</text>
<line x1="576.0" y1="313.8" x2="579.4" y2="310.8" stroke="#262626" stroke-width="0.9"/>
<text x="583.4" y="309.7" font-family="Liberation Sans, sans-serif" font-size="7.3" fill="#262626" text-anchor="middle" >50</text>
<line x1="581.7" y1="323.5" x2="586.0" y2="322.1" stroke="#262626" stroke-width="0.9"/>
<text x="591.2" y="322.9" font-family="Liberation Sans, sans-serif" font-size="7.3" fill="#262626" text-anchor="middle" >20</text>
<line x1="583.2" y1="332.5" x2="587.7" y2="332.5" stroke="#262626" stroke-width="0.9"/>
<text x="593.2" y="335.1" font-family="Liberation Sans, sans-serif" font-size="7.3" fill="#262626" text-anchor="middle" >10</text>
<line x1="580.8" y1="343.9" x2="584.9" y2="345.7" stroke="#262626" stroke-width="0.9"/>
<text x="589.9" y="350.6" font-family="Liberation Sans, sans-serif" font-size="7.3" fill="#262626" text-anchor="middle" >5</text>
<line x1="574.8" y1="352.5" x2="578.0" y2="355.7" stroke="#262626" stroke-width="0.9"/>
<text x="581.8" y="362.2" font-family="Liberation Sans, sans-serif" font-size="7.3" fill="#262626" text-anchor="middle" >2</text>
<circle cx="555.2" cy="332.5" r="28.8" fill="url(#dialOuter)" stroke="#505050" stroke-width="0.9"/>
<circle cx="556.0" cy="334.1" r="14.8" fill="#5a5a5a"/>
<circle cx="555.7" cy="333.5" r="14.2" fill="url(#capG)"/>
<path d="M528.2,332.5 L537.7,327.5 L537.7,337.5 Z" fill="#f0f020"/>
<path d="M558.2,341.0 L564.7,337.0 L564.7,343.0 Z" fill="#f0f020" opacity="0.85"/>
<rect x="537.7" y="363.0" width="35" height="13.5" fill="#ffffff" stroke="#1a1a1a" stroke-width="1.2"/>
<text x="539.7" y="373.8" font-family="Liberation Sans, sans-serif" font-size="9.5" fill="#101010" text-anchor="start" >5</text>
<text x="522.7" y="373.5" font-family="Liberation Sans, sans-serif" font-size="9.5" fill="#202020" text-anchor="middle" >V</text>
<text x="586.7" y="373.5" font-family="Liberation Sans, sans-serif" font-size="9.5" fill="#202020" text-anchor="middle" >mV</text>
<text x="629.7" y="207.5" font-family="Liberation Sans, sans-serif" font-size="9" fill="#262626" text-anchor="middle" >Position</text>
<rect x="612.7" y="210.7" width="36.6" height="77.2" fill="#c4c4c4" stroke="#1a1a1a" stroke-width="1.4"/>
<line x1="614" y1="212" x2="648" y2="212" stroke="#e8e8e8" stroke-width="1"/>
<rect x="619" y="212.6" width="24" height="73" fill="url(#drumV)"/>
<rect x="619" y="212.6" width="24" height="73" fill="url(#drumVs)"/>
<rect x="619" y="212.6" width="24" height="73" fill="none" stroke="#2a2a2a" stroke-width="1"/>
<line x1="620.5" y1="215.0" x2="623.0" y2="215.0" stroke="#e0e0e0" stroke-width="0.7" opacity="0.45"/>
<line x1="639.0" y1="215.0" x2="641.5" y2="215.0" stroke="#e0e0e0" stroke-width="0.7" opacity="0.45"/>
<line x1="620.5" y1="218.3" x2="623.0" y2="218.3" stroke="#e0e0e0" stroke-width="0.7" opacity="0.45"/>
<line x1="639.0" y1="218.3" x2="641.5" y2="218.3" stroke="#e0e0e0" stroke-width="0.7" opacity="0.45"/>
<line x1="620.5" y1="221.6" x2="623.0" y2="221.6" stroke="#e0e0e0" stroke-width="0.7" opacity="0.45"/>
<line x1="639.0" y1="221.6" x2="641.5" y2="221.6" stroke="#e0e0e0" stroke-width="0.7" opacity="0.45"/>
<line x1="620.5" y1="224.9" x2="623.0" y2="224.9" stroke="#e0e0e0" stroke-width="0.7" opacity="0.45"/>
<line x1="639.0" y1="224.9" x2="641.5" y2="224.9" stroke="#e0e0e0" stroke-width="0.7" opacity="0.45"/>
<line x1="620.5" y1="228.2" x2="623.0" y2="228.2" stroke="#e0e0e0" stroke-width="0.7" opacity="0.45"/>
<line x1="639.0" y1="228.2" x2="641.5" y2="228.2" stroke="#e0e0e0" stroke-width="0.7" opacity="0.45"/>
<line x1="620.5" y1="231.5" x2="623.0" y2="231.5" stroke="#e0e0e0" stroke-width="0.7" opacity="0.45"/>
<line x1="639.0" y1="231.5" x2="641.5" y2="231.5" stroke="#e0e0e0" stroke-width="0.7" opacity="0.45"/>
<line x1="620.5" y1="234.8" x2="623.0" y2="234.8" stroke="#e0e0e0" stroke-width="0.7" opacity="0.45"/>
<line x1="639.0" y1="234.8" x2="641.5" y2="234.8" stroke="#e0e0e0" stroke-width="0.7" opacity="0.45"/>
<line x1="620.5" y1="238.1" x2="623.0" y2="238.1" stroke="#e0e0e0" stroke-width="0.7" opacity="0.45"/>
<line x1="639.0" y1="238.1" x2="641.5" y2="238.1" stroke="#e0e0e0" stroke-width="0.7" opacity="0.45"/>
<line x1="620.5" y1="241.4" x2="623.0" y2="241.4" stroke="#e0e0e0" stroke-width="0.7" opacity="0.45"/>
<line x1="639.0" y1="241.4" x2="641.5" y2="241.4" stroke="#e0e0e0" stroke-width="0.7" opacity="0.45"/>
<line x1="620.5" y1="244.7" x2="623.0" y2="244.7" stroke="#e0e0e0" stroke-width="0.7" opacity="0.45"/>
<line x1="639.0" y1="244.7" x2="641.5" y2="244.7" stroke="#e0e0e0" stroke-width="0.7" opacity="0.45"/>
<line x1="620.5" y1="248.0" x2="623.0" y2="248.0" stroke="#e0e0e0" stroke-width="0.7" opacity="0.45"/>
<line x1="639.0" y1="248.0" x2="641.5" y2="248.0" stroke="#e0e0e0" stroke-width="0.7" opacity="0.45"/>
<line x1="620.5" y1="251.3" x2="623.0" y2="251.3" stroke="#e0e0e0" stroke-width="0.7" opacity="0.45"/>
<line x1="639.0" y1="251.3" x2="641.5" y2="251.3" stroke="#e0e0e0" stroke-width="0.7" opacity="0.45"/>
<line x1="620.5" y1="254.6" x2="623.0" y2="254.6" stroke="#e0e0e0" stroke-width="0.7" opacity="0.45"/>
<line x1="639.0" y1="254.6" x2="641.5" y2="254.6" stroke="#e0e0e0" stroke-width="0.7" opacity="0.45"/>
<line x1="620.5" y1="257.9" x2="623.0" y2="257.9" stroke="#e0e0e0" stroke-width="0.7" opacity="0.45"/>
<line x1="639.0" y1="257.9" x2="641.5" y2="257.9" stroke="#e0e0e0" stroke-width="0.7" opacity="0.45"/>
<line x1="620.5" y1="261.2" x2="623.0" y2="261.2" stroke="#e0e0e0" stroke-width="0.7" opacity="0.45"/>
<line x1="639.0" y1="261.2" x2="641.5" y2="261.2" stroke="#e0e0e0" stroke-width="0.7" opacity="0.45"/>
<line x1="620.5" y1="264.5" x2="623.0" y2="264.5" stroke="#e0e0e0" stroke-width="0.7" opacity="0.45"/>
<line x1="639.0" y1="264.5" x2="641.5" y2="264.5" stroke="#e0e0e0" stroke-width="0.7" opacity="0.45"/>
<line x1="620.5" y1="267.8" x2="623.0" y2="267.8" stroke="#e0e0e0" stroke-width="0.7" opacity="0.45"/>
<line x1="639.0" y1="267.8" x2="641.5" y2="267.8" stroke="#e0e0e0" stroke-width="0.7" opacity="0.45"/>
<line x1="620.5" y1="271.1" x2="623.0" y2="271.1" stroke="#e0e0e0" stroke-width="0.7" opacity="0.45"/>
<line x1="639.0" y1="271.1" x2="641.5" y2="271.1" stroke="#e0e0e0" stroke-width="0.7" opacity="0.45"/>
<line x1="620.5" y1="274.4" x2="623.0" y2="274.4" stroke="#e0e0e0" stroke-width="0.7" opacity="0.45"/>
<line x1="639.0" y1="274.4" x2="641.5" y2="274.4" stroke="#e0e0e0" stroke-width="0.7" opacity="0.45"/>
<line x1="620.5" y1="277.7" x2="623.0" y2="277.7" stroke="#e0e0e0" stroke-width="0.7" opacity="0.45"/>
<line x1="639.0" y1="277.7" x2="641.5" y2="277.7" stroke="#e0e0e0" stroke-width="0.7" opacity="0.45"/>
<line x1="620.5" y1="281.0" x2="623.0" y2="281.0" stroke="#e0e0e0" stroke-width="0.7" opacity="0.45"/>
<line x1="639.0" y1="281.0" x2="641.5" y2="281.0" stroke="#e0e0e0" stroke-width="0.7" opacity="0.45"/>
<line x1="620.5" y1="228.5" x2="623.5" y2="228.5" stroke="#262626" stroke-width="0.9"/>
<line x1="638.5" y1="228.5" x2="641.5" y2="228.5" stroke="#262626" stroke-width="0.9"/>
<text x="631.0" y="231.8" font-family="Liberation Sans, sans-serif" font-size="9" fill="#101010" text-anchor="middle" >-50</text>
<line x1="620.5" y1="248.0" x2="623.5" y2="248.0" stroke="#262626" stroke-width="0.9"/>
<line x1="638.5" y1="248.0" x2="641.5" y2="248.0" stroke="#262626" stroke-width="0.9"/>
<text x="631.0" y="251.3" font-family="Liberation Sans, sans-serif" font-size="9" fill="#101010" text-anchor="middle" >-40</text>
<line x1="620.5" y1="267.5" x2="623.5" y2="267.5" stroke="#262626" stroke-width="0.9"/>
<line x1="638.5" y1="267.5" x2="641.5" y2="267.5" stroke="#262626" stroke-width="0.9"/>
<text x="631.0" y="270.8" font-family="Liberation Sans, sans-serif" font-size="9" fill="#101010" text-anchor="middle" >-30</text>
<path d="M613,244 L619.5,248 L613,252 Z" fill="#e01818"/>
<path d="M649,244 L642.5,248 L649,252 Z" fill="#e01818"/>
<path d="M606.7,237.5 L611.0,243.5 L608.0,243.5 L608.0,252.5 L611.0,252.5 L606.7,258.5 L602.4000000000001,252.5 L605.4000000000001,252.5 L605.4000000000001,243.5 L602.4000000000001,243.5 Z" fill="#d03080"/>
<text x="674.5" y="213.6" font-family="Liberation Sans, sans-serif" font-size="9.2" fill="#262626" text-anchor="end" >AC</text>
<text x="674.5" y="227.2" font-family="Liberation Sans, sans-serif" font-size="9.2" fill="#262626" text-anchor="end" >DC</text>
<text x="674.5" y="240.8" font-family="Liberation Sans, sans-serif" font-size="9.2" fill="#262626" text-anchor="end" >GND</text>
<text x="674.5" y="254.4" font-family="Liberation Sans, sans-serif" font-size="9.2" fill="#262626" text-anchor="end" >OFF</text>
<rect x="677.1" y="200.6" width="12.099999999999955" height="59.8" fill="#c0c0c0" stroke="#1e1e1e" stroke-width="1.2"/>
<path d="M678.5,259 L678.5,202 L687.8,202" fill="none" stroke="#e8e8e8" stroke-width="1"/>
<line x1="683.15" y1="217.5" x2="683.15" y2="258" stroke="#101010" stroke-width="2.2"/>
<rect x="679.0" y="201.5" width="8.299999999999955" height="15" fill="#d8d8d8" stroke="#505050" stroke-width="0.8"/>
<line x1="680.5" y1="204.5" x2="685.8" y2="204.5" stroke="#505050" stroke-width="0.8"/>
<line x1="680.5" y1="207.5" x2="685.8" y2="207.5" stroke="#505050" stroke-width="0.8"/>
<line x1="680.5" y1="210.5" x2="685.8" y2="210.5" stroke="#505050" stroke-width="0.8"/>
<line x1="680.5" y1="213.5" x2="685.8" y2="213.5" stroke="#505050" stroke-width="0.8"/>
<rect x="676" y="263" width="14" height="14.5" fill="url(#btnDark)"/>
<path d="M676.5,277.5 L676.5,263.5 L690,263.5" fill="none" stroke="#f0f0f0" stroke-width="1"/>
<path d="M676,276.9 L689.4,276.9 L689.4,263" fill="none" stroke="#1a1a1a" stroke-width="1.2"/>
<text x="674.5" y="273.5" font-family="Liberation Sans, sans-serif" font-size="9" fill="#262626" text-anchor="end" >Invert</text>
<rect x="676" y="279.5" width="14" height="14.0" fill="url(#btnDark)"/>
<path d="M676.5,293.5 L676.5,280.0 L690,280.0" fill="none" stroke="#f0f0f0" stroke-width="1"/>
<path d="M676,292.9 L689.4,292.9 L689.4,279.5" fill="none" stroke="#1a1a1a" stroke-width="1.2"/>
<text x="674.5" y="289.5" font-family="Liberation Sans, sans-serif" font-size="9" fill="#262626" text-anchor="end" >C+D</text>
<path d="M603.7,376.5 L603.7,334.5 A43.5,43.5 0 0 1 690.7,334.5 L690.7,376.5 Z" fill="#f8f8f8" stroke="#909090" stroke-width="1"/>
<line x1="662.0" y1="308.8" x2="670.3" y2="295.6" stroke="#a0a0a0" stroke-width="3"/>
<line x1="662.0" y1="308.8" x2="670.3" y2="295.6" stroke="#d8d8d8" stroke-width="1"/>
<rect x="629.2" y="347.5" width="36" height="29.0" fill="#aeaeae"/>
<line x1="629.2" y1="347.5" x2="629.2" y2="376.5" stroke="#5a5a5a" stroke-width="1"/>
<line x1="665.2" y1="347.5" x2="665.2" y2="376.5" stroke="#5a5a5a" stroke-width="1"/>
<line x1="658.4" y1="306.8" x2="660.2" y2="302.7" stroke="#262626" stroke-width="0.9"/>
<text x="662.4" y="300.3" font-family="Liberation Sans, sans-serif" font-size="7.3" fill="#262626" text-anchor="middle" >0.1</text>
<line x1="647.2" y1="304.5" x2="647.2" y2="300.0" stroke="#262626" stroke-width="0.9"/>
<text x="647.2" y="297.1" font-family="Liberation Sans, sans-serif" font-size="7.3" fill="#262626" text-anchor="middle" >0.2</text>
<line x1="636.9" y1="306.4" x2="635.3" y2="302.3" stroke="#262626" stroke-width="0.9"/>
<text x="633.3" y="299.7" font-family="Liberation Sans, sans-serif" font-size="7.3" fill="#262626" text-anchor="middle" >0.5</text>
<line x1="627.2" y1="312.9" x2="624.0" y2="309.7" stroke="#262626" stroke-width="0.9"/>
<text x="620.1" y="308.5" font-family="Liberation Sans, sans-serif" font-size="7.3" fill="#262626" text-anchor="middle" >1</text>
<line x1="620.9" y1="322.9" x2="616.7" y2="321.4" stroke="#262626" stroke-width="0.9"/>
<text x="611.5" y="322.1" font-family="Liberation Sans, sans-serif" font-size="7.3" fill="#262626" text-anchor="middle" >2</text>
<line x1="619.2" y1="332.5" x2="614.7" y2="332.5" stroke="#262626" stroke-width="0.9"/>
<text x="609.2" y="335.1" font-family="Liberation Sans, sans-serif" font-size="7.3" fill="#262626" text-anchor="middle" >5</text>
<line x1="621.4" y1="343.4" x2="617.3" y2="345.2" stroke="#262626" stroke-width="0.9"/>
<text x="612.2" y="349.9" font-family="Liberation Sans, sans-serif" font-size="7.3" fill="#262626" text-anchor="middle" >10</text>
<line x1="626.7" y1="351.6" x2="623.4" y2="354.7" stroke="#262626" stroke-width="0.9"/>
<text x="619.4" y="361.0" font-family="Liberation Sans, sans-serif" font-size="7.3" fill="#262626" text-anchor="middle" >20</text>
<line x1="668.0" y1="313.8" x2="671.4" y2="310.8" stroke="#262626" stroke-width="0.9"/>
<text x="675.4" y="309.7" font-family="Liberation Sans, sans-serif" font-size="7.3" fill="#262626" text-anchor="middle" >50</text>
<line x1="673.7" y1="323.5" x2="678.0" y2="322.1" stroke="#262626" stroke-width="0.9"/>
<text x="683.2" y="322.9" font-family="Liberation Sans, sans-serif" font-size="7.3" fill="#262626" text-anchor="middle" >20</text>
<line x1="675.2" y1="332.5" x2="679.7" y2="332.5" stroke="#262626" stroke-width="0.9"/>
<text x="685.2" y="335.1" font-family="Liberation Sans, sans-serif" font-size="7.3" fill="#262626" text-anchor="middle" >10</text>
<line x1="672.8" y1="343.9" x2="676.9" y2="345.7" stroke="#262626" stroke-width="0.9"/>
<text x="681.9" y="350.6" font-family="Liberation Sans, sans-serif" font-size="7.3" fill="#262626" text-anchor="middle" >5</text>
<line x1="666.8" y1="352.5" x2="670.0" y2="355.7" stroke="#262626" stroke-width="0.9"/>
<text x="673.8" y="362.2" font-family="Liberation Sans, sans-serif" font-size="7.3" fill="#262626" text-anchor="middle" >2</text>
<circle cx="647.2" cy="332.5" r="28.8" fill="url(#dialOuter)" stroke="#505050" stroke-width="0.9"/>
<circle cx="648.0" cy="334.1" r="14.8" fill="#5a5a5a"/>
<circle cx="647.7" cy="333.5" r="14.2" fill="url(#capG)"/>
<path d="M620.2,332.5 L629.7,327.5 L629.7,337.5 Z" fill="#d03080"/>
<path d="M650.2,341.0 L656.7,337.0 L656.7,343.0 Z" fill="#d03080" opacity="0.85"/>
<rect x="629.7" y="363.0" width="35" height="13.5" fill="#ffffff" stroke="#1a1a1a" stroke-width="1.2"/>
<text x="631.7" y="373.8" font-family="Liberation Sans, sans-serif" font-size="9.5" fill="#101010" text-anchor="start" >5</text>
<text x="614.7" y="373.5" font-family="Liberation Sans, sans-serif" font-size="9.5" fill="#202020" text-anchor="middle" >V</text>
<text x="678.7" y="373.5" font-family="Liberation Sans, sans-serif" font-size="9.5" fill="#202020" text-anchor="middle" >mV</text>
<text x="537.7" y="414.5" font-family="Liberation Sans, sans-serif" font-size="9" fill="#262626" text-anchor="middle" >Position</text>
<rect x="520.7" y="417.7" width="36.6" height="77.2" fill="#c4c4c4" stroke="#1a1a1a" stroke-width="1.4"/>
<line x1="522" y1="419" x2="556" y2="419" stroke="#e8e8e8" stroke-width="1"/>
<rect x="527" y="419.6" width="24" height="73" fill="url(#drumV)"/>
<rect x="527" y="419.6" width="24" height="73" fill="url(#drumVs)"/>
<rect x="527" y="419.6" width="24" height="73" fill="none" stroke="#2a2a2a" stroke-width="1"/>
<line x1="528.5" y1="422.0" x2="531.0" y2="422.0" stroke="#e0e0e0" stroke-width="0.7" opacity="0.45"/>
<line x1="547.0" y1="422.0" x2="549.5" y2="422.0" stroke="#e0e0e0" stroke-width="0.7" opacity="0.45"/>
<line x1="528.5" y1="425.3" x2="531.0" y2="425.3" stroke="#e0e0e0" stroke-width="0.7" opacity="0.45"/>
<line x1="547.0" y1="425.3" x2="549.5" y2="425.3" stroke="#e0e0e0" stroke-width="0.7" opacity="0.45"/>
<line x1="528.5" y1="428.6" x2="531.0" y2="428.6" stroke="#e0e0e0" stroke-width="0.7" opacity="0.45"/>
<line x1="547.0" y1="428.6" x2="549.5" y2="428.6" stroke="#e0e0e0" stroke-width="0.7" opacity="0.45"/>
<line x1="528.5" y1="431.9" x2="531.0" y2="431.9" stroke="#e0e0e0" stroke-width="0.7" opacity="0.45"/>
<line x1="547.0" y1="431.9" x2="549.5" y2="431.9" stroke="#e0e0e0" stroke-width="0.7" opacity="0.45"/>
<line x1="528.5" y1="435.2" x2="531.0" y2="435.2" stroke="#e0e0e0" stroke-width="0.7" opacity="0.45"/>
<line x1="547.0" y1="435.2" x2="549.5" y2="435.2" stroke="#e0e0e0" stroke-width="0.7" opacity="0.45"/>
<line x1="528.5" y1="438.5" x2="531.0" y2="438.5" stroke="#e0e0e0" stroke-width="0.7" opacity="0.45"/>
<line x1="547.0" y1="438.5" x2="549.5" y2="438.5" stroke="#e0e0e0" stroke-width="0.7" opacity="0.45"/>
<line x1="528.5" y1="441.8" x2="531.0" y2="441.8" stroke="#e0e0e0" stroke-width="0.7" opacity="0.45"/>
<line x1="547.0" y1="441.8" x2="549.5" y2="441.8" stroke="#e0e0e0" stroke-width="0.7" opacity="0.45"/>
<line x1="528.5" y1="445.1" x2="531.0" y2="445.1" stroke="#e0e0e0" stroke-width="0.7" opacity="0.45"/>
<line x1="547.0" y1="445.1" x2="549.5" y2="445.1" stroke="#e0e0e0" stroke-width="0.7" opacity="0.45"/>
<line x1="528.5" y1="448.4" x2="531.0" y2="448.4" stroke="#e0e0e0" stroke-width="0.7" opacity="0.45"/>
<line x1="547.0" y1="448.4" x2="549.5" y2="448.4" stroke="#e0e0e0" stroke-width="0.7" opacity="0.45"/>
<line x1="528.5" y1="451.7" x2="531.0" y2="451.7" stroke="#e0e0e0" stroke-width="0.7" opacity="0.45"/>
<line x1="547.0" y1="451.7" x2="549.5" y2="451.7" stroke="#e0e0e0" stroke-width="0.7" opacity="0.45"/>
<line x1="528.5" y1="455.0" x2="531.0" y2="455.0" stroke="#e0e0e0" stroke-width="0.7" opacity="0.45"/>
<line x1="547.0" y1="455.0" x2="549.5" y2="455.0" stroke="#e0e0e0" stroke-width="0.7" opacity="0.45"/>
<line x1="528.5" y1="458.3" x2="531.0" y2="458.3" stroke="#e0e0e0" stroke-width="0.7" opacity="0.45"/>
<line x1="547.0" y1="458.3" x2="549.5" y2="458.3" stroke="#e0e0e0" stroke-width="0.7" opacity="0.45"/>
<line x1="528.5" y1="461.6" x2="531.0" y2="461.6" stroke="#e0e0e0" stroke-width="0.7" opacity="0.45"/>
<line x1="547.0" y1="461.6" x2="549.5" y2="461.6" stroke="#e0e0e0" stroke-width="0.7" opacity="0.45"/>
<line x1="528.5" y1="464.9" x2="531.0" y2="464.9" stroke="#e0e0e0" stroke-width="0.7" opacity="0.45"/>
<line x1="547.0" y1="464.9" x2="549.5" y2="464.9" stroke="#e0e0e0" stroke-width="0.7" opacity="0.45"/>
<line x1="528.5" y1="468.2" x2="531.0" y2="468.2" stroke="#e0e0e0" stroke-width="0.7" opacity="0.45"/>
<line x1="547.0" y1="468.2" x2="549.5" y2="468.2" stroke="#e0e0e0" stroke-width="0.7" opacity="0.45"/>
<line x1="528.5" y1="471.5" x2="531.0" y2="471.5" stroke="#e0e0e0" stroke-width="0.7" opacity="0.45"/>
<line x1="547.0" y1="471.5" x2="549.5" y2="471.5" stroke="#e0e0e0" stroke-width="0.7" opacity="0.45"/>
<line x1="528.5" y1="474.8" x2="531.0" y2="474.8" stroke="#e0e0e0" stroke-width="0.7" opacity="0.45"/>
<line x1="547.0" y1="474.8" x2="549.5" y2="474.8" stroke="#e0e0e0" stroke-width="0.7" opacity="0.45"/>
<line x1="528.5" y1="478.1" x2="531.0" y2="478.1" stroke="#e0e0e0" stroke-width="0.7" opacity="0.45"/>
<line x1="547.0" y1="478.1" x2="549.5" y2="478.1" stroke="#e0e0e0" stroke-width="0.7" opacity="0.45"/>
<line x1="528.5" y1="481.4" x2="531.0" y2="481.4" stroke="#e0e0e0" stroke-width="0.7" opacity="0.45"/>
<line x1="547.0" y1="481.4" x2="549.5" y2="481.4" stroke="#e0e0e0" stroke-width="0.7" opacity="0.45"/>
<line x1="528.5" y1="484.7" x2="531.0" y2="484.7" stroke="#e0e0e0" stroke-width="0.7" opacity="0.45"/>
<line x1="547.0" y1="484.7" x2="549.5" y2="484.7" stroke="#e0e0e0" stroke-width="0.7" opacity="0.45"/>
<line x1="528.5" y1="488.0" x2="531.0" y2="488.0" stroke="#e0e0e0" stroke-width="0.7" opacity="0.45"/>
<line x1="547.0" y1="488.0" x2="549.5" y2="488.0" stroke="#e0e0e0" stroke-width="0.7" opacity="0.45"/>
<line x1="528.5" y1="435.5" x2="531.5" y2="435.5" stroke="#262626" stroke-width="0.9"/>
<line x1="546.5" y1="435.5" x2="549.5" y2="435.5" stroke="#262626" stroke-width="0.9"/>
<text x="539.0" y="438.8" font-family="Liberation Sans, sans-serif" font-size="9" fill="#101010" text-anchor="middle" >30</text>
<line x1="528.5" y1="455.0" x2="531.5" y2="455.0" stroke="#262626" stroke-width="0.9"/>
<line x1="546.5" y1="455.0" x2="549.5" y2="455.0" stroke="#262626" stroke-width="0.9"/>
<text x="539.0" y="458.3" font-family="Liberation Sans, sans-serif" font-size="9" fill="#101010" text-anchor="middle" >40</text>
<line x1="528.5" y1="474.5" x2="531.5" y2="474.5" stroke="#262626" stroke-width="0.9"/>
<line x1="546.5" y1="474.5" x2="549.5" y2="474.5" stroke="#262626" stroke-width="0.9"/>
<text x="539.0" y="477.8" font-family="Liberation Sans, sans-serif" font-size="9" fill="#101010" text-anchor="middle" >50</text>
<path d="M521,451 L527.5,455 L521,459 Z" fill="#e01818"/>
<path d="M557,451 L550.5,455 L557,459 Z" fill="#e01818"/>
<path d="M514.7,444.5 L519.0,450.5 L516.0,450.5 L516.0,459.5 L519.0,459.5 L514.7,465.5 L510.40000000000003,459.5 L513.4000000000001,459.5 L513.4000000000001,450.5 L510.40000000000003,450.5 Z" fill="#2a90e0"/>
<text x="582.5" y="420.6" font-family="Liberation Sans, sans-serif" font-size="9.2" fill="#262626" text-anchor="end" >AC</text>
<text x="582.5" y="434.2" font-family="Liberation Sans, sans-serif" font-size="9.2" fill="#262626" text-anchor="end" >DC</text>
<text x="582.5" y="447.8" font-family="Liberation Sans, sans-serif" font-size="9.2" fill="#262626" text-anchor="end" >GND</text>
<text x="582.5" y="461.4" font-family="Liberation Sans, sans-serif" font-size="9.2" fill="#262626" text-anchor="end" >OFF</text>
<rect x="585.1" y="407.6" width="12.099999999999955" height="59.8" fill="#c0c0c0" stroke="#1e1e1e" stroke-width="1.2"/>
<path d="M586.5,466 L586.5,409 L595.8,409" fill="none" stroke="#e8e8e8" stroke-width="1"/>
<line x1="591.15" y1="424.5" x2="591.15" y2="465" stroke="#101010" stroke-width="2.2"/>
<rect x="587.0" y="408.5" width="8.299999999999955" height="15" fill="#d8d8d8" stroke="#505050" stroke-width="0.8"/>
<line x1="588.5" y1="411.5" x2="593.8" y2="411.5" stroke="#505050" stroke-width="0.8"/>
<line x1="588.5" y1="414.5" x2="593.8" y2="414.5" stroke="#505050" stroke-width="0.8"/>
<line x1="588.5" y1="417.5" x2="593.8" y2="417.5" stroke="#505050" stroke-width="0.8"/>
<line x1="588.5" y1="420.5" x2="593.8" y2="420.5" stroke="#505050" stroke-width="0.8"/>
<rect x="584" y="470" width="14" height="14.5" fill="url(#btnDark)"/>
<path d="M584.5,484.5 L584.5,470.5 L598,470.5" fill="none" stroke="#f0f0f0" stroke-width="1"/>
<path d="M584,483.9 L597.4,483.9 L597.4,470" fill="none" stroke="#1a1a1a" stroke-width="1.2"/>
<text x="582.5" y="480.5" font-family="Liberation Sans, sans-serif" font-size="9" fill="#262626" text-anchor="end" >Invert</text>
<path d="M511.70000000000005,583.5 L511.70000000000005,541.5 A43.5,43.5 0 0 1 598.7,541.5 L598.7,583.5 Z" fill="#f8f8f8" stroke="#909090" stroke-width="1"/>
<line x1="570.0" y1="515.8" x2="578.3" y2="502.6" stroke="#a0a0a0" stroke-width="3"/>
<line x1="570.0" y1="515.8" x2="578.3" y2="502.6" stroke="#d8d8d8" stroke-width="1"/>
<rect x="537.2" y="554.5" width="36" height="29.0" fill="#aeaeae"/>
<line x1="537.2" y1="554.5" x2="537.2" y2="583.5" stroke="#5a5a5a" stroke-width="1"/>
<line x1="573.2" y1="554.5" x2="573.2" y2="583.5" stroke="#5a5a5a" stroke-width="1"/>
<line x1="566.4" y1="513.8" x2="568.2" y2="509.7" stroke="#262626" stroke-width="0.9"/>
<text x="570.4" y="507.3" font-family="Liberation Sans, sans-serif" font-size="7.3" fill="#262626" text-anchor="middle" >0.1</text>
<line x1="555.2" y1="511.5" x2="555.2" y2="507.0" stroke="#262626" stroke-width="0.9"/>
<text x="555.2" y="504.1" font-family="Liberation Sans, sans-serif" font-size="7.3" fill="#262626" text-anchor="middle" >0.2</text>
<line x1="544.9" y1="513.4" x2="543.3" y2="509.3" stroke="#262626" stroke-width="0.9"/>
<text x="541.3" y="506.7" font-family="Liberation Sans, sans-serif" font-size="7.3" fill="#262626" text-anchor="middle" >0.5</text>
<line x1="535.2" y1="519.9" x2="532.0" y2="516.7" stroke="#262626" stroke-width="0.9"/>
<text x="528.1" y="515.5" font-family="Liberation Sans, sans-serif" font-size="7.3" fill="#262626" text-anchor="middle" >1</text>
<line x1="528.9" y1="529.9" x2="524.7" y2="528.4" stroke="#262626" stroke-width="0.9"/>
<text x="519.5" y="529.1" font-family="Liberation Sans, sans-serif" font-size="7.3" fill="#262626" text-anchor="middle" >2</text>
<line x1="527.2" y1="539.5" x2="522.7" y2="539.5" stroke="#262626" stroke-width="0.9"/>
<text x="517.2" y="542.1" font-family="Liberation Sans, sans-serif" font-size="7.3" fill="#262626" text-anchor="middle" >5</text>
<line x1="529.4" y1="550.4" x2="525.3" y2="552.2" stroke="#262626" stroke-width="0.9"/>
<text x="520.2" y="556.9" font-family="Liberation Sans, sans-serif" font-size="7.3" fill="#262626" text-anchor="middle" >10</text>
<line x1="534.7" y1="558.6" x2="531.4" y2="561.7" stroke="#262626" stroke-width="0.9"/>
<text x="527.4" y="568.0" font-family="Liberation Sans, sans-serif" font-size="7.3" fill="#262626" text-anchor="middle" >20</text>
<line x1="576.0" y1="520.8" x2="579.4" y2="517.8" stroke="#262626" stroke-width="0.9"/>
<text x="583.4" y="516.7" font-family="Liberation Sans, sans-serif" font-size="7.3" fill="#262626" text-anchor="middle" >50</text>
<line x1="581.7" y1="530.5" x2="586.0" y2="529.1" stroke="#262626" stroke-width="0.9"/>
<text x="591.2" y="529.9" font-family="Liberation Sans, sans-serif" font-size="7.3" fill="#262626" text-anchor="middle" >20</text>
<line x1="583.2" y1="539.5" x2="587.7" y2="539.5" stroke="#262626" stroke-width="0.9"/>
<text x="593.2" y="542.1" font-family="Liberation Sans, sans-serif" font-size="7.3" fill="#262626" text-anchor="middle" >10</text>
<line x1="580.8" y1="550.9" x2="584.9" y2="552.7" stroke="#262626" stroke-width="0.9"/>
<text x="589.9" y="557.6" font-family="Liberation Sans, sans-serif" font-size="7.3" fill="#262626" text-anchor="middle" >5</text>
<line x1="574.8" y1="559.5" x2="578.0" y2="562.7" stroke="#262626" stroke-width="0.9"/>
<text x="581.8" y="569.2" font-family="Liberation Sans, sans-serif" font-size="7.3" fill="#262626" text-anchor="middle" >2</text>
<circle cx="555.2" cy="539.5" r="28.8" fill="url(#dialOuter)" stroke="#505050" stroke-width="0.9"/>
<circle cx="556.0" cy="541.1" r="14.8" fill="#5a5a5a"/>
<circle cx="555.7" cy="540.5" r="14.2" fill="url(#capG)"/>
<path d="M528.2,539.5 L537.7,534.5 L537.7,544.5 Z" fill="#2a90e0"/>
<path d="M558.2,548.0 L564.7,544.0 L564.7,550.0 Z" fill="#2a90e0" opacity="0.85"/>
<rect x="537.7" y="570.0" width="35" height="13.5" fill="#ffffff" stroke="#1a1a1a" stroke-width="1.2"/>
<text x="539.7" y="580.8" font-family="Liberation Sans, sans-serif" font-size="9.5" fill="#101010" text-anchor="start" >5</text>
<text x="522.7" y="580.5" font-family="Liberation Sans, sans-serif" font-size="9.5" fill="#202020" text-anchor="middle" >V</text>
<text x="586.7" y="580.5" font-family="Liberation Sans, sans-serif" font-size="9.5" fill="#202020" text-anchor="middle" >mV</text>
<text x="629.7" y="414.5" font-family="Liberation Sans, sans-serif" font-size="9" fill="#262626" text-anchor="middle" >Position</text>
<rect x="612.7" y="417.7" width="36.6" height="77.2" fill="#c4c4c4" stroke="#1a1a1a" stroke-width="1.4"/>
<line x1="614" y1="419" x2="648" y2="419" stroke="#e8e8e8" stroke-width="1"/>
<rect x="619" y="419.6" width="24" height="73" fill="url(#drumV)"/>
<rect x="619" y="419.6" width="24" height="73" fill="url(#drumVs)"/>
<rect x="619" y="419.6" width="24" height="73" fill="none" stroke="#2a2a2a" stroke-width="1"/>
<line x1="620.5" y1="422.0" x2="623.0" y2="422.0" stroke="#e0e0e0" stroke-width="0.7" opacity="0.45"/>
<line x1="639.0" y1="422.0" x2="641.5" y2="422.0" stroke="#e0e0e0" stroke-width="0.7" opacity="0.45"/>
<line x1="620.5" y1="425.3" x2="623.0" y2="425.3" stroke="#e0e0e0" stroke-width="0.7" opacity="0.45"/>
<line x1="639.0" y1="425.3" x2="641.5" y2="425.3" stroke="#e0e0e0" stroke-width="0.7" opacity="0.45"/>
<line x1="620.5" y1="428.6" x2="623.0" y2="428.6" stroke="#e0e0e0" stroke-width="0.7" opacity="0.45"/>
<line x1="639.0" y1="428.6" x2="641.5" y2="428.6" stroke="#e0e0e0" stroke-width="0.7" opacity="0.45"/>
<line x1="620.5" y1="431.9" x2="623.0" y2="431.9" stroke="#e0e0e0" stroke-width="0.7" opacity="0.45"/>
<line x1="639.0" y1="431.9" x2="641.5" y2="431.9" stroke="#e0e0e0" stroke-width="0.7" opacity="0.45"/>
<line x1="620.5" y1="435.2" x2="623.0" y2="435.2" stroke="#e0e0e0" stroke-width="0.7" opacity="0.45"/>
<line x1="639.0" y1="435.2" x2="641.5" y2="435.2" stroke="#e0e0e0" stroke-width="0.7" opacity="0.45"/>
<line x1="620.5" y1="438.5" x2="623.0" y2="438.5" stroke="#e0e0e0" stroke-width="0.7" opacity="0.45"/>
<line x1="639.0" y1="438.5" x2="641.5" y2="438.5" stroke="#e0e0e0" stroke-width="0.7" opacity="0.45"/>
<line x1="620.5" y1="441.8" x2="623.0" y2="441.8" stroke="#e0e0e0" stroke-width="0.7" opacity="0.45"/>
<line x1="639.0" y1="441.8" x2="641.5" y2="441.8" stroke="#e0e0e0" stroke-width="0.7" opacity="0.45"/>
<line x1="620.5" y1="445.1" x2="623.0" y2="445.1" stroke="#e0e0e0" stroke-width="0.7" opacity="0.45"/>
<line x1="639.0" y1="445.1" x2="641.5" y2="445.1" stroke="#e0e0e0" stroke-width="0.7" opacity="0.45"/>
<line x1="620.5" y1="448.4" x2="623.0" y2="448.4" stroke="#e0e0e0" stroke-width="0.7" opacity="0.45"/>
<line x1="639.0" y1="448.4" x2="641.5" y2="448.4" stroke="#e0e0e0" stroke-width="0.7" opacity="0.45"/>
<line x1="620.5" y1="451.7" x2="623.0" y2="451.7" stroke="#e0e0e0" stroke-width="0.7" opacity="0.45"/>
<line x1="639.0" y1="451.7" x2="641.5" y2="451.7" stroke="#e0e0e0" stroke-width="0.7" opacity="0.45"/>
<line x1="620.5" y1="455.0" x2="623.0" y2="455.0" stroke="#e0e0e0" stroke-width="0.7" opacity="0.45"/>
<line x1="639.0" y1="455.0" x2="641.5" y2="455.0" stroke="#e0e0e0" stroke-width="0.7" opacity="0.45"/>
<line x1="620.5" y1="458.3" x2="623.0" y2="458.3" stroke="#e0e0e0" stroke-width="0.7" opacity="0.45"/>
<line x1="639.0" y1="458.3" x2="641.5" y2="458.3" stroke="#e0e0e0" stroke-width="0.7" opacity="0.45"/>
<line x1="620.5" y1="461.6" x2="623.0" y2="461.6" stroke="#e0e0e0" stroke-width="0.7" opacity="0.45"/>
<line x1="639.0" y1="461.6" x2="641.5" y2="461.6" stroke="#e0e0e0" stroke-width="0.7" opacity="0.45"/>
<line x1="620.5" y1="464.9" x2="623.0" y2="464.9" stroke="#e0e0e0" stroke-width="0.7" opacity="0.45"/>
<line x1="639.0" y1="464.9" x2="641.5" y2="464.9" stroke="#e0e0e0" stroke-width="0.7" opacity="0.45"/>
<line x1="620.5" y1="468.2" x2="623.0" y2="468.2" stroke="#e0e0e0" stroke-width="0.7" opacity="0.45"/>
<line x1="639.0" y1="468.2" x2="641.5" y2="468.2" stroke="#e0e0e0" stroke-width="0.7" opacity="0.45"/>
<line x1="620.5" y1="471.5" x2="623.0" y2="471.5" stroke="#e0e0e0" stroke-width="0.7" opacity="0.45"/>
<line x1="639.0" y1="471.5" x2="641.5" y2="471.5" stroke="#e0e0e0" stroke-width="0.7" opacity="0.45"/>
<line x1="620.5" y1="474.8" x2="623.0" y2="474.8" stroke="#e0e0e0" stroke-width="0.7" opacity="0.45"/>
<line x1="639.0" y1="474.8" x2="641.5" y2="474.8" stroke="#e0e0e0" stroke-width="0.7" opacity="0.45"/>
<line x1="620.5" y1="478.1" x2="623.0" y2="478.1" stroke="#e0e0e0" stroke-width="0.7" opacity="0.45"/>
<line x1="639.0" y1="478.1" x2="641.5" y2="478.1" stroke="#e0e0e0" stroke-width="0.7" opacity="0.45"/>
<line x1="620.5" y1="481.4" x2="623.0" y2="481.4" stroke="#e0e0e0" stroke-width="0.7" opacity="0.45"/>
<line x1="639.0" y1="481.4" x2="641.5" y2="481.4" stroke="#e0e0e0" stroke-width="0.7" opacity="0.45"/>
<line x1="620.5" y1="484.7" x2="623.0" y2="484.7" stroke="#e0e0e0" stroke-width="0.7" opacity="0.45"/>
<line x1="639.0" y1="484.7" x2="641.5" y2="484.7" stroke="#e0e0e0" stroke-width="0.7" opacity="0.45"/>
<line x1="620.5" y1="488.0" x2="623.0" y2="488.0" stroke="#e0e0e0" stroke-width="0.7" opacity="0.45"/>
<line x1="639.0" y1="488.0" x2="641.5" y2="488.0" stroke="#e0e0e0" stroke-width="0.7" opacity="0.45"/>
<line x1="620.5" y1="435.5" x2="623.5" y2="435.5" stroke="#262626" stroke-width="0.9"/>
<line x1="638.5" y1="435.5" x2="641.5" y2="435.5" stroke="#262626" stroke-width="0.9"/>
<text x="631.0" y="438.8" font-family="Liberation Sans, sans-serif" font-size="9" fill="#101010" text-anchor="middle" >-130</text>
<line x1="620.5" y1="455.0" x2="623.5" y2="455.0" stroke="#262626" stroke-width="0.9"/>
<line x1="638.5" y1="455.0" x2="641.5" y2="455.0" stroke="#262626" stroke-width="0.9"/>
<text x="631.0" y="458.3" font-family="Liberation Sans, sans-serif" font-size="9" fill="#101010" text-anchor="middle" >-120</text>
<line x1="620.5" y1="474.5" x2="623.5" y2="474.5" stroke="#262626" stroke-width="0.9"/>
<line x1="638.5" y1="474.5" x2="641.5" y2="474.5" stroke="#262626" stroke-width="0.9"/>
<text x="631.0" y="477.8" font-family="Liberation Sans, sans-serif" font-size="9" fill="#101010" text-anchor="middle" >-110</text>
<path d="M613,451 L619.5,455 L613,459 Z" fill="#e01818"/>
<path d="M649,451 L642.5,455 L649,459 Z" fill="#e01818"/>
<path d="M606.7,444.5 L611.0,450.5 L608.0,450.5 L608.0,459.5 L611.0,459.5 L606.7,465.5 L602.4000000000001,459.5 L605.4000000000001,459.5 L605.4000000000001,450.5 L602.4000000000001,450.5 Z" fill="#18904a"/>
<text x="674.5" y="420.6" font-family="Liberation Sans, sans-serif" font-size="9.2" fill="#262626" text-anchor="end" >AC</text>
<text x="674.5" y="434.2" font-family="Liberation Sans, sans-serif" font-size="9.2" fill="#262626" text-anchor="end" >DC</text>
<text x="674.5" y="447.8" font-family="Liberation Sans, sans-serif" font-size="9.2" fill="#262626" text-anchor="end" >GND</text>
<text x="674.5" y="461.4" font-family="Liberation Sans, sans-serif" font-size="9.2" fill="#262626" text-anchor="end" >OFF</text>
<rect x="677.1" y="407.6" width="12.099999999999955" height="59.8" fill="#c0c0c0" stroke="#1e1e1e" stroke-width="1.2"/>
<path d="M678.5,466 L678.5,409 L687.8,409" fill="none" stroke="#e8e8e8" stroke-width="1"/>
<line x1="683.15" y1="424.5" x2="683.15" y2="465" stroke="#101010" stroke-width="2.2"/>
<rect x="679.0" y="408.5" width="8.299999999999955" height="15" fill="#d8d8d8" stroke="#505050" stroke-width="0.8"/>
<line x1="680.5" y1="411.5" x2="685.8" y2="411.5" stroke="#505050" stroke-width="0.8"/>
<line x1="680.5" y1="414.5" x2="685.8" y2="414.5" stroke="#505050" stroke-width="0.8"/>
<line x1="680.5" y1="417.5" x2="685.8" y2="417.5" stroke="#505050" stroke-width="0.8"/>
<line x1="680.5" y1="420.5" x2="685.8" y2="420.5" stroke="#505050" stroke-width="0.8"/>
<rect x="676" y="470" width="14" height="14.5" fill="url(#btnDark)"/>
<path d="M676.5,484.5 L676.5,470.5 L690,470.5" fill="none" stroke="#f0f0f0" stroke-width="1"/>
<path d="M676,483.9 L689.4,483.9 L689.4,470" fill="none" stroke="#1a1a1a" stroke-width="1.2"/>
<text x="674.5" y="480.5" font-family="Liberation Sans, sans-serif" font-size="9" fill="#262626" text-anchor="end" >Invert</text>
<path d="M603.7,583.5 L603.7,541.5 A43.5,43.5 0 0 1 690.7,541.5 L690.7,583.5 Z" fill="#f8f8f8" stroke="#909090" stroke-width="1"/>
<line x1="662.0" y1="515.8" x2="670.3" y2="502.6" stroke="#a0a0a0" stroke-width="3"/>
<line x1="662.0" y1="515.8" x2="670.3" y2="502.6" stroke="#d8d8d8" stroke-width="1"/>
<rect x="629.2" y="554.5" width="36" height="29.0" fill="#aeaeae"/>
<line x1="629.2" y1="554.5" x2="629.2" y2="583.5" stroke="#5a5a5a" stroke-width="1"/>
<line x1="665.2" y1="554.5" x2="665.2" y2="583.5" stroke="#5a5a5a" stroke-width="1"/>
<line x1="658.4" y1="513.8" x2="660.2" y2="509.7" stroke="#262626" stroke-width="0.9"/>
<text x="662.4" y="507.3" font-family="Liberation Sans, sans-serif" font-size="7.3" fill="#262626" text-anchor="middle" >0.1</text>
<line x1="647.2" y1="511.5" x2="647.2" y2="507.0" stroke="#262626" stroke-width="0.9"/>
<text x="647.2" y="504.1" font-family="Liberation Sans, sans-serif" font-size="7.3" fill="#262626" text-anchor="middle" >0.2</text>
<line x1="636.9" y1="513.4" x2="635.3" y2="509.3" stroke="#262626" stroke-width="0.9"/>
<text x="633.3" y="506.7" font-family="Liberation Sans, sans-serif" font-size="7.3" fill="#262626" text-anchor="middle" >0.5</text>
<line x1="627.2" y1="519.9" x2="624.0" y2="516.7" stroke="#262626" stroke-width="0.9"/>
<text x="620.1" y="515.5" font-family="Liberation Sans, sans-serif" font-size="7.3" fill="#262626" text-anchor="middle" >1</text>
<line x1="620.9" y1="529.9" x2="616.7" y2="528.4" stroke="#262626" stroke-width="0.9"/>
<text x="611.5" y="529.1" font-family="Liberation Sans, sans-serif" font-size="7.3" fill="#262626" text-anchor="middle" >2</text>
<line x1="619.2" y1="539.5" x2="614.7" y2="539.5" stroke="#262626" stroke-width="0.9"/>
<text x="609.2" y="542.1" font-family="Liberation Sans, sans-serif" font-size="7.3" fill="#262626" text-anchor="middle" >5</text>
<line x1="621.4" y1="550.4" x2="617.3" y2="552.2" stroke="#262626" stroke-width="0.9"/>
<text x="612.2" y="556.9" font-family="Liberation Sans, sans-serif" font-size="7.3" fill="#262626" text-anchor="middle" >10</text>
<line x1="626.7" y1="558.6" x2="623.4" y2="561.7" stroke="#262626" stroke-width="0.9"/>
<text x="619.4" y="568.0" font-family="Liberation Sans, sans-serif" font-size="7.3" fill="#262626" text-anchor="middle" >20</text>
<line x1="668.0" y1="520.8" x2="671.4" y2="517.8" stroke="#262626" stroke-width="0.9"/>
<text x="675.4" y="516.7" font-family="Liberation Sans, sans-serif" font-size="7.3" fill="#262626" text-anchor="middle" >50</text>
<line x1="673.7" y1="530.5" x2="678.0" y2="529.1" stroke="#262626" stroke-width="0.9"/>
<text x="683.2" y="529.9" font-family="Liberation Sans, sans-serif" font-size="7.3" fill="#262626" text-anchor="middle" >20</text>
<line x1="675.2" y1="539.5" x2="679.7" y2="539.5" stroke="#262626" stroke-width="0.9"/>
<text x="685.2" y="542.1" font-family="Liberation Sans, sans-serif" font-size="7.3" fill="#262626" text-anchor="middle" >10</text>
<line x1="672.8" y1="550.9" x2="676.9" y2="552.7" stroke="#262626" stroke-width="0.9"/>
<text x="681.9" y="557.6" font-family="Liberation Sans, sans-serif" font-size="7.3" fill="#262626" text-anchor="middle" >5</text>
<line x1="666.8" y1="559.5" x2="670.0" y2="562.7" stroke="#262626" stroke-width="0.9"/>
<text x="673.8" y="569.2" font-family="Liberation Sans, sans-serif" font-size="7.3" fill="#262626" text-anchor="middle" >2</text>
<circle cx="647.2" cy="539.5" r="28.8" fill="url(#dialOuter)" stroke="#505050" stroke-width="0.9"/>
<circle cx="648.0" cy="541.1" r="14.8" fill="#5a5a5a"/>
<circle cx="647.7" cy="540.5" r="14.2" fill="url(#capG)"/>
<path d="M620.2,539.5 L629.7,534.5 L629.7,544.5 Z" fill="#18904a"/>
<path d="M650.2,548.0 L656.7,544.0 L656.7,550.0 Z" fill="#18904a" opacity="0.85"/>
<rect x="629.7" y="570.0" width="35" height="13.5" fill="#ffffff" stroke="#1a1a1a" stroke-width="1.2"/>
<text x="631.7" y="580.8" font-family="Liberation Sans, sans-serif" font-size="9.5" fill="#101010" text-anchor="start" >5</text>
<text x="614.7" y="580.5" font-family="Liberation Sans, sans-serif" font-size="9.5" fill="#202020" text-anchor="middle" >V</text>
<text x="678.7" y="580.5" font-family="Liberation Sans, sans-serif" font-size="9.5" fill="#202020" text-anchor="middle" >mV</text>
<text x="446.5" y="207.5" font-family="Liberation Sans, sans-serif" font-size="9" fill="#262626" text-anchor="middle" >Level</text>
<rect x="428.7" y="210.7" width="36.6" height="77.2" fill="#c4c4c4" stroke="#1a1a1a" stroke-width="1.4"/>
<line x1="430" y1="212" x2="464" y2="212" stroke="#e8e8e8" stroke-width="1"/>
<rect x="435" y="212.6" width="24" height="73" fill="url(#drumV)"/>
<rect x="435" y="212.6" width="24" height="73" fill="url(#drumVs)"/>
<rect x="435" y="212.6" width="24" height="73" fill="none" stroke="#2a2a2a" stroke-width="1"/>
<line x1="436.5" y1="215.0" x2="439.0" y2="215.0" stroke="#e0e0e0" stroke-width="0.7" opacity="0.45"/>
<line x1="455.0" y1="215.0" x2="457.5" y2="215.0" stroke="#e0e0e0" stroke-width="0.7" opacity="0.45"/>
<line x1="436.5" y1="218.3" x2="439.0" y2="218.3" stroke="#e0e0e0" stroke-width="0.7" opacity="0.45"/>
<line x1="455.0" y1="218.3" x2="457.5" y2="218.3" stroke="#e0e0e0" stroke-width="0.7" opacity="0.45"/>
<line x1="436.5" y1="221.6" x2="439.0" y2="221.6" stroke="#e0e0e0" stroke-width="0.7" opacity="0.45"/>
<line x1="455.0" y1="221.6" x2="457.5" y2="221.6" stroke="#e0e0e0" stroke-width="0.7" opacity="0.45"/>
<line x1="436.5" y1="224.9" x2="439.0" y2="224.9" stroke="#e0e0e0" stroke-width="0.7" opacity="0.45"/>
<line x1="455.0" y1="224.9" x2="457.5" y2="224.9" stroke="#e0e0e0" stroke-width="0.7" opacity="0.45"/>
<line x1="436.5" y1="228.2" x2="439.0" y2="228.2" stroke="#e0e0e0" stroke-width="0.7" opacity="0.45"/>
<line x1="455.0" y1="228.2" x2="457.5" y2="228.2" stroke="#e0e0e0" stroke-width="0.7" opacity="0.45"/>
<line x1="436.5" y1="231.5" x2="439.0" y2="231.5" stroke="#e0e0e0" stroke-width="0.7" opacity="0.45"/>
<line x1="455.0" y1="231.5" x2="457.5" y2="231.5" stroke="#e0e0e0" stroke-width="0.7" opacity="0.45"/>
<line x1="436.5" y1="234.8" x2="439.0" y2="234.8" stroke="#e0e0e0" stroke-width="0.7" opacity="0.45"/>
<line x1="455.0" y1="234.8" x2="457.5" y2="234.8" stroke="#e0e0e0" stroke-width="0.7" opacity="0.45"/>
<line x1="436.5" y1="238.1" x2="439.0" y2="238.1" stroke="#e0e0e0" stroke-width="0.7" opacity="0.45"/>
<line x1="455.0" y1="238.1" x2="457.5" y2="238.1" stroke="#e0e0e0" stroke-width="0.7" opacity="0.45"/>
<line x1="436.5" y1="241.4" x2="439.0" y2="241.4" stroke="#e0e0e0" stroke-width="0.7" opacity="0.45"/>
<line x1="455.0" y1="241.4" x2="457.5" y2="241.4" stroke="#e0e0e0" stroke-width="0.7" opacity="0.45"/>
<line x1="436.5" y1="244.7" x2="439.0" y2="244.7" stroke="#e0e0e0" stroke-width="0.7" opacity="0.45"/>
<line x1="455.0" y1="244.7" x2="457.5" y2="244.7" stroke="#e0e0e0" stroke-width="0.7" opacity="0.45"/>
<line x1="436.5" y1="248.0" x2="439.0" y2="248.0" stroke="#e0e0e0" stroke-width="0.7" opacity="0.45"/>
<line x1="455.0" y1="248.0" x2="457.5" y2="248.0" stroke="#e0e0e0" stroke-width="0.7" opacity="0.45"/>
<line x1="436.5" y1="251.3" x2="439.0" y2="251.3" stroke="#e0e0e0" stroke-width="0.7" opacity="0.45"/>
<line x1="455.0" y1="251.3" x2="457.5" y2="251.3" stroke="#e0e0e0" stroke-width="0.7" opacity="0.45"/>
<line x1="436.5" y1="254.6" x2="439.0" y2="254.6" stroke="#e0e0e0" stroke-width="0.7" opacity="0.45"/>
<line x1="455.0" y1="254.6" x2="457.5" y2="254.6" stroke="#e0e0e0" stroke-width="0.7" opacity="0.45"/>
<line x1="436.5" y1="257.9" x2="439.0" y2="257.9" stroke="#e0e0e0" stroke-width="0.7" opacity="0.45"/>
<line x1="455.0" y1="257.9" x2="457.5" y2="257.9" stroke="#e0e0e0" stroke-width="0.7" opacity="0.45"/>
<line x1="436.5" y1="261.2" x2="439.0" y2="261.2" stroke="#e0e0e0" stroke-width="0.7" opacity="0.45"/>
<line x1="455.0" y1="261.2" x2="457.5" y2="261.2" stroke="#e0e0e0" stroke-width="0.7" opacity="0.45"/>
<line x1="436.5" y1="264.5" x2="439.0" y2="264.5" stroke="#e0e0e0" stroke-width="0.7" opacity="0.45"/>
<line x1="455.0" y1="264.5" x2="457.5" y2="264.5" stroke="#e0e0e0" stroke-width="0.7" opacity="0.45"/>
<line x1="436.5" y1="267.8" x2="439.0" y2="267.8" stroke="#e0e0e0" stroke-width="0.7" opacity="0.45"/>
<line x1="455.0" y1="267.8" x2="457.5" y2="267.8" stroke="#e0e0e0" stroke-width="0.7" opacity="0.45"/>
<line x1="436.5" y1="271.1" x2="439.0" y2="271.1" stroke="#e0e0e0" stroke-width="0.7" opacity="0.45"/>
<line x1="455.0" y1="271.1" x2="457.5" y2="271.1" stroke="#e0e0e0" stroke-width="0.7" opacity="0.45"/>
<line x1="436.5" y1="274.4" x2="439.0" y2="274.4" stroke="#e0e0e0" stroke-width="0.7" opacity="0.45"/>
<line x1="455.0" y1="274.4" x2="457.5" y2="274.4" stroke="#e0e0e0" stroke-width="0.7" opacity="0.45"/>
<line x1="436.5" y1="277.7" x2="439.0" y2="277.7" stroke="#e0e0e0" stroke-width="0.7" opacity="0.45"/>
<line x1="455.0" y1="277.7" x2="457.5" y2="277.7" stroke="#e0e0e0" stroke-width="0.7" opacity="0.45"/>
<line x1="436.5" y1="281.0" x2="439.0" y2="281.0" stroke="#e0e0e0" stroke-width="0.7" opacity="0.45"/>
<line x1="455.0" y1="281.0" x2="457.5" y2="281.0" stroke="#e0e0e0" stroke-width="0.7" opacity="0.45"/>
<line x1="436.5" y1="228.5" x2="439.5" y2="228.5" stroke="#262626" stroke-width="0.9"/>
<line x1="454.5" y1="228.5" x2="457.5" y2="228.5" stroke="#262626" stroke-width="0.9"/>
<text x="447.0" y="231.8" font-family="Liberation Sans, sans-serif" font-size="9" fill="#101010" text-anchor="middle" >-10</text>
<line x1="436.5" y1="248.0" x2="439.5" y2="248.0" stroke="#262626" stroke-width="0.9"/>
<line x1="454.5" y1="248.0" x2="457.5" y2="248.0" stroke="#262626" stroke-width="0.9"/>
<text x="447.0" y="251.3" font-family="Liberation Sans, sans-serif" font-size="9" fill="#101010" text-anchor="middle" >0</text>
<line x1="436.5" y1="267.5" x2="439.5" y2="267.5" stroke="#262626" stroke-width="0.9"/>
<line x1="454.5" y1="267.5" x2="457.5" y2="267.5" stroke="#262626" stroke-width="0.9"/>
<text x="447.0" y="270.8" font-family="Liberation Sans, sans-serif" font-size="9" fill="#101010" text-anchor="middle" >10</text>
<path d="M429,244 L435.5,248 L429,252 Z" fill="#e01818"/>
<path d="M465,244 L458.5,248 L465,252 Z" fill="#e01818"/>
<path d="M424.5,238 L428.5,244 L425.8,244 L425.8,252 L428.5,252 L424.5,258 L420.5,252 L423.2,252 L423.2,244 L420.5,244 Z" fill="#e8a0a0" opacity="0.45"/>
<text x="489.5" y="213.5" font-family="Liberation Sans, sans-serif" font-size="9.2" fill="#262626" text-anchor="end" >AC</text>
<text x="489.5" y="227.5" font-family="Liberation Sans, sans-serif" font-size="9.2" fill="#262626" text-anchor="end" >DC</text>
<rect x="492.6" y="201.4" width="12.600000000000012" height="29.99999999999999" fill="#c0c0c0" stroke="#1e1e1e" stroke-width="1.2"/>
<path d="M494,230 L494,202.8 L503.8,202.8" fill="none" stroke="#e8e8e8" stroke-width="1"/>
<line x1="498.9" y1="203.8" x2="498.9" y2="214.5" stroke="#101010" stroke-width="2.2"/>
<rect x="494.5" y="215.5" width="8.800000000000011" height="15" fill="#d8d8d8" stroke="#505050" stroke-width="0.8"/>
<line x1="496" y1="218.5" x2="501.8" y2="218.5" stroke="#505050" stroke-width="0.8"/>
<line x1="496" y1="221.5" x2="501.8" y2="221.5" stroke="#505050" stroke-width="0.8"/>
<line x1="496" y1="224.5" x2="501.8" y2="224.5" stroke="#505050" stroke-width="0.8"/>
<line x1="496" y1="227.5" x2="501.8" y2="227.5" stroke="#505050" stroke-width="0.8"/>
<rect x="492.6" y="245.29999999999998" width="12.600000000000012" height="30.400000000000023" fill="#c0c0c0" stroke="#1e1e1e" stroke-width="1.2"/>
<path d="M494,274.3 L494,246.7 L503.8,246.7" fill="none" stroke="#e8e8e8" stroke-width="1"/>
<line x1="498.9" y1="262.2" x2="498.9" y2="273.3" stroke="#101010" stroke-width="2.2"/>
<rect x="494.5" y="246.2" width="8.800000000000011" height="15" fill="#d8d8d8" stroke="#505050" stroke-width="0.8"/>
<line x1="496" y1="249.2" x2="501.8" y2="249.2" stroke="#505050" stroke-width="0.8"/>
<line x1="496" y1="252.2" x2="501.8" y2="252.2" stroke="#505050" stroke-width="0.8"/>
<line x1="496" y1="255.2" x2="501.8" y2="255.2" stroke="#505050" stroke-width="0.8"/>
<line x1="496" y1="258.2" x2="501.8" y2="258.2" stroke="#505050" stroke-width="0.8"/>
<path d="M481.5,258.5 L484.5,258.5 L484.5,248.5 L488.5,248.5" fill="none" stroke="#202020" stroke-width="1.2"/>
<path d="M481.5,262.5 L484.5,262.5 L484.5,272.5 L488.5,272.5" fill="none" stroke="#202020" stroke-width="1.2"/>
<rect x="491.7" y="288.7" width="14.100000000000023" height="13.800000000000011" fill="url(#btnPink)"/>
<path d="M492.2,302.5 L492.2,289.2 L505.8,289.2" fill="none" stroke="#f0f0f0" stroke-width="1"/>
<path d="M491.7,301.9 L505.2,301.9 L505.2,288.7" fill="none" stroke="#1a1a1a" stroke-width="1.2"/>
<rect x="491.7" y="303.7" width="14.100000000000023" height="14.600000000000023" fill="url(#btnDark)"/>
<path d="M492.2,318.3 L492.2,304.2 L505.8,304.2" fill="none" stroke="#f0f0f0" stroke-width="1"/>
<path d="M491.7,317.7 L505.2,317.7 L505.2,303.7" fill="none" stroke="#1a1a1a" stroke-width="1.2"/>
<rect x="491.7" y="320" width="14.100000000000023" height="14.699999999999989" fill="url(#btnDark)"/>
<path d="M492.2,334.7 L492.2,320.5 L505.8,320.5" fill="none" stroke="#f0f0f0" stroke-width="1"/>
<path d="M491.7,334.09999999999997 L505.2,334.09999999999997 L505.2,320" fill="none" stroke="#1a1a1a" stroke-width="1.2"/>
<text x="489.5" y="299.6" font-family="Liberation Sans, sans-serif" font-size="9.4" fill="#262626" text-anchor="end" >Auto</text>
<text x="489.5" y="314.2" font-family="Liberation Sans, sans-serif" font-size="9.4" fill="#262626" text-anchor="end" >One-Shot</text>
<text x="489.5" y="329.8" font-family="Liberation Sans, sans-serif" font-size="9.4" fill="#262626" text-anchor="end" >Cursors</text>
<text x="461.7" y="349.8" font-family="Liberation Sans, sans-serif" font-size="9.2" fill="#262626" text-anchor="middle" >Source</text>
<text x="442.5" y="360.0" font-family="Liberation Sans, sans-serif" font-size="9" fill="#e8e840" text-anchor="middle" font-weight="bold" opacity="0.8">A</text>
<text x="456.7" y="360.0" font-family="Liberation Sans, sans-serif" font-size="9" fill="#40a8e0" text-anchor="middle" font-weight="bold" opacity="0.8">B</text>
<text x="470.8" y="360.0" font-family="Liberation Sans, sans-serif" font-size="9" fill="#e04898" text-anchor="middle" font-weight="bold" opacity="0.8">C</text>
<text x="485.0" y="360.0" font-family="Liberation Sans, sans-serif" font-size="9" fill="#30a060" text-anchor="middle" font-weight="bold" opacity="0.8">D</text>
<rect x="432.3" y="362.6" width="60.40000000000002" height="13.100000000000012" fill="#c0c0c0" stroke="#1e1e1e" stroke-width="1.2"/>
<path d="M433.7,374.3 L433.7,364 L491.3,364" fill="none" stroke="#e8e8e8" stroke-width="1"/>
<line x1="446.7" y1="369.15" x2="487.3" y2="369.15" stroke="#101010" stroke-width="2.2"/>
<rect x="433.7" y="364.5" width="14" height="9.300000000000011" fill="#d8d8d8" stroke="#505050" stroke-width="0.8"/>
<line x1="436.7" y1="366" x2="436.7" y2="372.3" stroke="#505050" stroke-width="0.8"/>
<line x1="439.7" y1="366" x2="439.7" y2="372.3" stroke="#505050" stroke-width="0.8"/>
<line x1="442.7" y1="366" x2="442.7" y2="372.3" stroke="#505050" stroke-width="0.8"/>
<line x1="445.7" y1="366" x2="445.7" y2="372.3" stroke="#505050" stroke-width="0.8"/>
<text x="461.3" y="418.3" font-family="Liberation Sans, sans-serif" font-size="9.2" fill="#262626" text-anchor="middle" >Source</text>
<text x="433.3" y="427.0" font-family="Liberation Sans, sans-serif" font-size="9" fill="#d89a50" text-anchor="middle" font-weight="bold" opacity="0.8">-1</text>
<text x="448.3" y="427.0" font-family="Liberation Sans, sans-serif" font-size="9" fill="#e8e840" text-anchor="middle" font-weight="bold" opacity="0.8">A</text>
<text x="462.5" y="427.0" font-family="Liberation Sans, sans-serif" font-size="9" fill="#40a8e0" text-anchor="middle" font-weight="bold" opacity="0.8">B</text>
<text x="476.7" y="427.0" font-family="Liberation Sans, sans-serif" font-size="9" fill="#e04898" text-anchor="middle" font-weight="bold" opacity="0.8">C</text>
<text x="490.8" y="427.0" font-family="Liberation Sans, sans-serif" font-size="9" fill="#30a060" text-anchor="middle" font-weight="bold" opacity="0.8">D</text>
<rect x="425.3" y="430.6" width="75.8" height="12.49999999999999" fill="#c0c0c0" stroke="#1e1e1e" stroke-width="1.2"/>
<path d="M426.7,441.7 L426.7,432 L499.7,432" fill="none" stroke="#e8e8e8" stroke-width="1"/>
<line x1="439.7" y1="436.85" x2="495.7" y2="436.85" stroke="#101010" stroke-width="2.2"/>
<rect x="426.7" y="432.5" width="14" height="8.699999999999989" fill="#d8d8d8" stroke="#505050" stroke-width="0.8"/>
<line x1="429.7" y1="434" x2="429.7" y2="439.7" stroke="#505050" stroke-width="0.8"/>
<line x1="432.7" y1="434" x2="432.7" y2="439.7" stroke="#505050" stroke-width="0.8"/>
<line x1="435.7" y1="434" x2="435.7" y2="439.7" stroke="#505050" stroke-width="0.8"/>
<line x1="438.7" y1="434" x2="438.7" y2="439.7" stroke="#505050" stroke-width="0.8"/>
<text x="461.3" y="455.3" font-family="Liberation Sans, sans-serif" font-size="9.2" fill="#262626" text-anchor="middle" >Position</text>
<rect x="424.8" y="458.6" width="77.2" height="36.8" fill="#c4c4c4" stroke="#1a1a1a" stroke-width="1.4"/>
<rect x="426.5" y="464.5" width="73.5" height="24.5" fill="url(#drumH)"/>
<rect x="426.5" y="464.5" width="73.5" height="24.5" fill="url(#drumHs)"/>
<line x1="430.3" y1="465.5" x2="430.3" y2="467.0" stroke="#262626" stroke-width="0.7"/>
<line x1="430.3" y1="486.5" x2="430.3" y2="488" stroke="#262626" stroke-width="0.7"/>
<line x1="433.6" y1="465.5" x2="433.6" y2="468.0" stroke="#262626" stroke-width="0.7"/>
<line x1="433.6" y1="485.5" x2="433.6" y2="488" stroke="#262626" stroke-width="0.7"/>
<line x1="436.9" y1="465.5" x2="436.9" y2="467.0" stroke="#262626" stroke-width="0.7"/>
<line x1="436.9" y1="486.5" x2="436.9" y2="488" stroke="#262626" stroke-width="0.7"/>
<line x1="440.2" y1="465.5" x2="440.2" y2="467.0" stroke="#262626" stroke-width="0.7"/>
<line x1="440.2" y1="486.5" x2="440.2" y2="488" stroke="#262626" stroke-width="0.7"/>
<line x1="443.5" y1="465.5" x2="443.5" y2="468.0" stroke="#262626" stroke-width="0.7"/>
<line x1="443.5" y1="485.5" x2="443.5" y2="488" stroke="#262626" stroke-width="0.7"/>
<line x1="446.8" y1="465.5" x2="446.8" y2="467.0" stroke="#262626" stroke-width="0.7"/>
<line x1="446.8" y1="486.5" x2="446.8" y2="488" stroke="#262626" stroke-width="0.7"/>
<line x1="450.1" y1="465.5" x2="450.1" y2="467.0" stroke="#262626" stroke-width="0.7"/>
<line x1="450.1" y1="486.5" x2="450.1" y2="488" stroke="#262626" stroke-width="0.7"/>
<line x1="453.4" y1="465.5" x2="453.4" y2="468.0" stroke="#262626" stroke-width="0.7"/>
<line x1="453.4" y1="485.5" x2="453.4" y2="488" stroke="#262626" stroke-width="0.7"/>
<line x1="456.7" y1="465.5" x2="456.7" y2="467.0" stroke="#262626" stroke-width="0.7"/>
<line x1="456.7" y1="486.5" x2="456.7" y2="488" stroke="#262626" stroke-width="0.7"/>
<line x1="460.0" y1="465.5" x2="460.0" y2="467.0" stroke="#262626" stroke-width="0.7"/>
<line x1="460.0" y1="486.5" x2="460.0" y2="488" stroke="#262626" stroke-width="0.7"/>
<line x1="463.3" y1="465.5" x2="463.3" y2="468.0" stroke="#262626" stroke-width="0.7"/>
<line x1="463.3" y1="485.5" x2="463.3" y2="488" stroke="#262626" stroke-width="0.7"/>
<line x1="466.6" y1="465.5" x2="466.6" y2="467.0" stroke="#262626" stroke-width="0.7"/>
<line x1="466.6" y1="486.5" x2="466.6" y2="488" stroke="#262626" stroke-width="0.7"/>
<line x1="469.9" y1="465.5" x2="469.9" y2="467.0" stroke="#262626" stroke-width="0.7"/>
<line x1="469.9" y1="486.5" x2="469.9" y2="488" stroke="#262626" stroke-width="0.7"/>
<line x1="473.2" y1="465.5" x2="473.2" y2="468.0" stroke="#262626" stroke-width="0.7"/>
<line x1="473.2" y1="485.5" x2="473.2" y2="488" stroke="#262626" stroke-width="0.7"/>
<line x1="476.5" y1="465.5" x2="476.5" y2="467.0" stroke="#262626" stroke-width="0.7"/>
<line x1="476.5" y1="486.5" x2="476.5" y2="488" stroke="#262626" stroke-width="0.7"/>
<line x1="479.8" y1="465.5" x2="479.8" y2="467.0" stroke="#262626" stroke-width="0.7"/>
<line x1="479.8" y1="486.5" x2="479.8" y2="488" stroke="#262626" stroke-width="0.7"/>
<line x1="483.1" y1="465.5" x2="483.1" y2="468.0" stroke="#262626" stroke-width="0.7"/>
<line x1="483.1" y1="485.5" x2="483.1" y2="488" stroke="#262626" stroke-width="0.7"/>
<line x1="486.4" y1="465.5" x2="486.4" y2="467.0" stroke="#262626" stroke-width="0.7"/>
<line x1="486.4" y1="486.5" x2="486.4" y2="488" stroke="#262626" stroke-width="0.7"/>
<line x1="489.7" y1="465.5" x2="489.7" y2="467.0" stroke="#262626" stroke-width="0.7"/>
<line x1="489.7" y1="486.5" x2="489.7" y2="488" stroke="#262626" stroke-width="0.7"/>
<line x1="493.0" y1="465.5" x2="493.0" y2="468.0" stroke="#262626" stroke-width="0.7"/>
<line x1="493.0" y1="485.5" x2="493.0" y2="488" stroke="#262626" stroke-width="0.7"/>
<line x1="496.3" y1="465.5" x2="496.3" y2="467.0" stroke="#262626" stroke-width="0.7"/>
<line x1="496.3" y1="486.5" x2="496.3" y2="488" stroke="#262626" stroke-width="0.7"/>
<text x="441.6" y="479.7" font-family="Liberation Sans, sans-serif" font-size="9.2" fill="#1a1a1a" text-anchor="middle" >210</text>
<text x="461.5" y="479.7" font-family="Liberation Sans, sans-serif" font-size="9.2" fill="#1a1a1a" text-anchor="middle" >200</text>
<text x="481.3" y="479.7" font-family="Liberation Sans, sans-serif" font-size="9.2" fill="#1a1a1a" text-anchor="middle" >190</text>
<path d="M457.5,458.5 L465.5,458.5 L461.5,463.5 Z" fill="#e01818"/>
<path d="M457.5,495 L465.5,495 L461.5,490 Z" fill="#e01818"/>
<path d="M419.3,584 L419.3,542 A43.5,43.5 0 0 1 506.3,542 L506.3,584 Z" fill="#f8f8f8" stroke="#909090" stroke-width="1"/>
<line x1="477.6" y1="516.3" x2="485.9" y2="503.1" stroke="#a0a0a0" stroke-width="3"/>
<line x1="477.6" y1="516.3" x2="485.9" y2="503.1" stroke="#d8d8d8" stroke-width="1"/>
<rect x="444.8" y="555" width="36" height="29" fill="#aeaeae"/>
<line x1="444.8" y1="555" x2="444.8" y2="584" stroke="#5a5a5a" stroke-width="1"/>
<line x1="480.8" y1="555" x2="480.8" y2="584" stroke="#5a5a5a" stroke-width="1"/>
<line x1="473.5" y1="514.1" x2="475.2" y2="510.0" stroke="#262626" stroke-width="0.9"/>
<text x="477.3" y="507.5" font-family="Liberation Sans, sans-serif" font-size="7.3" fill="#262626" text-anchor="middle" >0.1</text>
<line x1="466.4" y1="512.2" x2="467.0" y2="507.8" stroke="#262626" stroke-width="0.9"/>
<text x="467.7" y="504.9" font-family="Liberation Sans, sans-serif" font-size="7.3" fill="#262626" text-anchor="middle" >0.2</text>
<line x1="457.6" y1="512.5" x2="456.8" y2="508.1" stroke="#262626" stroke-width="0.9"/>
<text x="455.8" y="505.2" font-family="Liberation Sans, sans-serif" font-size="7.3" fill="#262626" text-anchor="middle" >0.5</text>
<line x1="451.4" y1="514.4" x2="449.6" y2="510.3" stroke="#262626" stroke-width="0.9"/>
<text x="447.3" y="507.9" font-family="Liberation Sans, sans-serif" font-size="7.3" fill="#262626" text-anchor="middle" >1</text>
<line x1="444.5" y1="518.8" x2="441.6" y2="515.4" stroke="#262626" stroke-width="0.9"/>
<text x="438.0" y="513.8" font-family="Liberation Sans, sans-serif" font-size="7.3" fill="#262626" text-anchor="middle" >2</text>
<line x1="439.1" y1="525.1" x2="435.3" y2="522.7" stroke="#262626" stroke-width="0.9"/>
<text x="430.6" y="522.4" font-family="Liberation Sans, sans-serif" font-size="7.3" fill="#262626" text-anchor="middle" >5</text>
<line x1="435.9" y1="532.2" x2="431.6" y2="530.9" stroke="#262626" stroke-width="0.9"/>
<text x="426.3" y="532.0" font-family="Liberation Sans, sans-serif" font-size="7.3" fill="#262626" text-anchor="middle" >10</text>
<line x1="434.8" y1="539.4" x2="430.3" y2="539.3" stroke="#262626" stroke-width="0.9"/>
<text x="424.8" y="541.8" font-family="Liberation Sans, sans-serif" font-size="7.3" fill="#262626" text-anchor="middle" >20</text>
<line x1="435.7" y1="547.0" x2="431.3" y2="548.1" stroke="#262626" stroke-width="0.9"/>
<text x="426.0" y="552.1" font-family="Liberation Sans, sans-serif" font-size="7.3" fill="#262626" text-anchor="middle" >50</text>
<line x1="438.3" y1="553.5" x2="434.3" y2="555.7" stroke="#262626" stroke-width="0.9"/>
<text x="429.5" y="560.9" font-family="Liberation Sans, sans-serif" font-size="7.3" fill="#262626" text-anchor="middle" >100</text>
<line x1="443.4" y1="560.2" x2="440.3" y2="563.5" stroke="#262626" stroke-width="0.9"/>
<text x="436.5" y="570.0" font-family="Liberation Sans, sans-serif" font-size="7.3" fill="#262626" text-anchor="middle" >200</text>
<line x1="482.1" y1="519.7" x2="485.2" y2="516.4" stroke="#262626" stroke-width="0.9"/>
<text x="489.0" y="515.0" font-family="Liberation Sans, sans-serif" font-size="7.3" fill="#262626" text-anchor="middle" >50</text>
<line x1="486.5" y1="525.2" x2="490.4" y2="522.8" stroke="#262626" stroke-width="0.9"/>
<text x="495.0" y="522.5" font-family="Liberation Sans, sans-serif" font-size="7.3" fill="#262626" text-anchor="middle" >20</text>
<line x1="489.6" y1="532.0" x2="493.9" y2="530.7" stroke="#262626" stroke-width="0.9"/>
<text x="499.2" y="531.7" font-family="Liberation Sans, sans-serif" font-size="7.3" fill="#262626" text-anchor="middle" >10</text>
<line x1="490.8" y1="539.4" x2="495.3" y2="539.3" stroke="#262626" stroke-width="0.9"/>
<text x="500.8" y="541.8" font-family="Liberation Sans, sans-serif" font-size="7.3" fill="#262626" text-anchor="middle" >5</text>
<line x1="490.0" y1="546.8" x2="494.3" y2="547.9" stroke="#262626" stroke-width="0.9"/>
<text x="499.7" y="551.8" font-family="Liberation Sans, sans-serif" font-size="7.3" fill="#262626" text-anchor="middle" >2</text>
<line x1="486.8" y1="554.4" x2="490.7" y2="556.7" stroke="#262626" stroke-width="0.9"/>
<text x="495.4" y="562.2" font-family="Liberation Sans, sans-serif" font-size="7.3" fill="#262626" text-anchor="middle" >1</text>
<line x1="482.4" y1="560.0" x2="485.6" y2="563.2" stroke="#262626" stroke-width="0.9"/>
<text x="489.4" y="569.7" font-family="Liberation Sans, sans-serif" font-size="7.3" fill="#262626" text-anchor="middle" >0.5</text>
<circle cx="462.8" cy="540" r="28.8" fill="url(#dialOuter)" stroke="#505050" stroke-width="0.9"/>
<circle cx="463.6" cy="541.6" r="14.8" fill="#5a5a5a"/>
<circle cx="463.3" cy="541" r="14.2" fill="url(#capG)"/>
<path d="M448.8,514 L459.3,519.5 L449.8,526 Z" fill="#e08020"/>
<path d="M464.8,546 L472.3,543 L471.8,551 Z" fill="#e08020" opacity="0.75"/>
<rect x="445.3" y="570.5" width="35" height="13.5" fill="#ffffff" stroke="#1a1a1a" stroke-width="1.2"/>
<text x="447.3" y="581.3" font-family="Liberation Sans, sans-serif" font-size="9.5" fill="#101010" text-anchor="start" >1m</text>
<text x="430.3" y="581.0" font-family="Liberation Sans, sans-serif" font-size="9.5" fill="#202020" text-anchor="middle" >mS</text>
<text x="494.3" y="581.0" font-family="Liberation Sans, sans-serif" font-size="9.5" fill="#202020" text-anchor="middle" >µS</text>
</svg></body></html>
